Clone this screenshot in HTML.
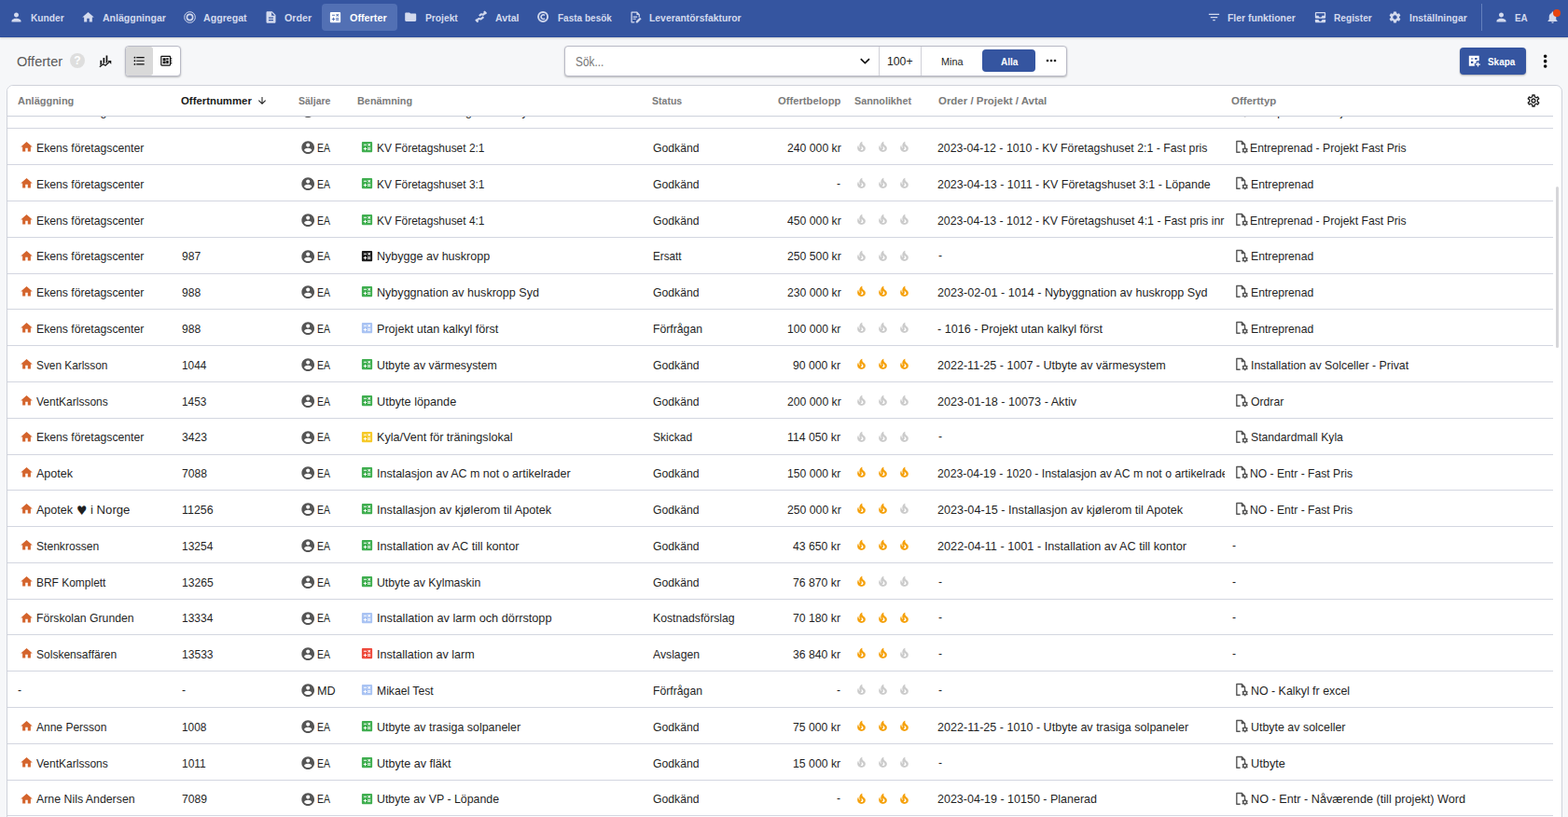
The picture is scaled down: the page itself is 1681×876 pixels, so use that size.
<!DOCTYPE html>
<html lang="sv"><head><meta charset="utf-8"><title>Offerter</title>
<style>
*{box-sizing:border-box;margin:0;padding:0}
html,body{width:1681px;height:876px;overflow:hidden;background:#f6f7f9;font-family:"Liberation Sans","DejaVu Sans",sans-serif;}
body{position:relative}
.i{position:absolute;display:block;overflow:visible}
.t{position:absolute;white-space:nowrap;line-height:16px;height:16px;transform-origin:0 0}
#nav{position:absolute;left:0;top:0;width:1681px;height:40px;background:#3555a0;border-bottom:1px solid #2d4e9d;box-shadow:0 1px 2px rgba(0,0,0,.18)}
.n{font-size:11px;font-weight:700;color:#d3daee}
.na{color:#fff}
#act{position:absolute;left:345px;top:4px;width:81px;height:29px;border-radius:4px;background:#5270b4}
#div{position:absolute;left:1588px;top:4px;width:1px;height:29px;background:#6480bd}
#dot{position:absolute;left:1665px;top:10px;width:8px;height:8px;border-radius:50%;background:#e8440f}
.box{position:absolute;background:#fff;border:1px solid #b9bac6;border-radius:4px;box-shadow:0 1px 2px rgba(0,0,0,.25)}
#card{position:absolute;left:7px;top:91px;width:1668px;height:800px;background:#fff;border:1px solid #cfd2da;border-radius:7px;overflow:hidden}
#rows{position:absolute;left:0;top:0;width:1657px;height:800px}
.r{position:absolute;left:0;width:1657px;border-bottom:1px solid #d3d6e0;font-size:13px;color:#1f1f1f}
#thead{position:absolute;left:0;top:0;width:1657px;height:33px;background:#fff;border-bottom:1px solid #cdd1dc}
.h{font-size:11px;font-weight:700;color:#7b7b7b}
.hd{color:#1a1a1a}
.clip{position:absolute;overflow:hidden;top:0}
#sb{position:absolute;left:1660px;top:108px;width:3px;height:173px;background:#d6d6d9;border-radius:2px}
</style></head>
<body>
<div id="nav">
<div id="act"></div>
<svg class="i" style="left:10.0px;top:10.5px" width="15" height="15" viewBox="0 0 24 24" fill="#d3daee"><path d="M12 12c2.21 0 4-1.79 4-4s-1.79-4-4-4-4 1.79-4 4 1.79 4 4 4zm0 2c-2.67 0-8 1.34-8 4v2h16v-2c0-2.66-5.33-4-8-4z"/></svg><span class="t n" style="left:32.76px;top:11px;transform:scaleX(0.9276);">Kunder</span>
<svg class="i" style="left:87.3px;top:10.5px" width="15" height="15" viewBox="0 0 24 24" fill="#d3daee"><path d="M10 20v-6h4v6h5v-8h3L12 3 2 12h3v8z"/></svg><span class="t n" style="left:109.6px;top:11px;transform:scaleX(0.957);">Anläggningar</span>
<svg class="i" style="left:195.5px;top:10.5px" width="15" height="15" viewBox="0 0 24 24" fill="#d3daee"><circle cx="12" cy="12" r="9.3" fill="none" stroke="#d3daee" stroke-width="1.6"/><circle cx="12" cy="12" r="5" fill="none" stroke="#d3daee" stroke-width="2.6"/></svg><span class="t n" style="left:218.4px;top:11px;transform:scaleX(0.9649);">Aggregat</span>
<svg class="i" style="left:282.5px;top:10.5px" width="15" height="15" viewBox="0 0 24 24" fill="#d3daee"><path d="M14 2H6c-1.1 0-1.99.9-1.99 2L4 20c0 1.1.89 2 1.99 2H18c1.1 0 2-.9 2-2V8l-6-6zm2 16H8v-2h8v2zm0-4H8v-2h8v2zm-3-5V3.5L18.5 9H13z"/></svg><span class="t n" style="left:305.4px;top:11px;transform:scaleX(0.9751);">Order</span>
<svg class="i" style="left:352.2px;top:10.5px" width="15" height="15" viewBox="0 0 24 24" fill="#fff"><path d="M19 3H5c-1.1 0-2 .9-2 2v14c0 1.1.9 2 2 2h14c1.1 0 2-.9 2-2V5c0-1.1-.9-2-2-2zm-5.97 4.06L14.09 6l1.41 1.41L16.91 6l1.06 1.06-1.41 1.41 1.41 1.41-1.06 1.06-1.41-1.4-1.41 1.41-1.06-1.06 1.41-1.41-1.41-1.42zm-6.78.66h5v1.5h-5v-1.5zM11.5 16h-2v2H8v-2H6v-1.5h2v-2h1.5v2h2V16zm6.5 1.25h-5v-1.5h5v1.5zm0-2.5h-5v-1.5h5v1.5z"/></svg><span class="t n na" style="left:374.64px;top:11px;transform:scaleX(0.9812);">Offerter</span>
<svg class="i" style="left:432.8px;top:10.5px" width="14.4" height="14.4" viewBox="0 0 24 24" fill="#d3daee"><path d="M10 4H4c-1.1 0-1.99.9-1.99 2L2 18c0 1.1.9 2 2 2h16c1.1 0 2-.9 2-2V8c0-1.1-.9-2-2-2h-8l-2-2z"/></svg><span class="t n" style="left:455.54px;top:11px;transform:scaleX(0.9328);">Projekt</span>
<svg class="i" style="left:509.2px;top:10.5px" width="13.6" height="13.6" viewBox="0 0 24 24" fill="#d3daee"><g fill="none" stroke="#d3daee" stroke-width="3.800" stroke-linejoin="round"><path d="M8.500 10.500l3.500-3 4 .800 5-4.500"/><path d="M2.500 20.500l5-4.500 4 .800 5-4.300"/></g><path d="M18.500 1l4.500 4.500-2.500 2.500-4.500-4.500zM5 23.500l-4.500-4.500 2.500-2.500 4.500 4.500z"/></svg><span class="t n" style="left:531.2px;top:11px;transform:scaleX(0.9638);">Avtal</span>
<svg class="i" style="left:575px;top:10.5px" width="14.2" height="14.2" viewBox="0 0 24 24" fill="#d3daee"><circle cx="12" cy="12" r="8.500" fill="none" stroke="#d3daee" stroke-width="3.200"/><path d="M15.200 9.300a3.800 3.800 0 1 0 0 5.400" fill="none" stroke="#d3daee" stroke-width="2.600"/></svg><span class="t n" style="left:597.81px;top:11px;transform:scaleX(0.9108);">Fasta besök</span>
<svg class="i" style="left:674px;top:10.5px" width="15" height="15" viewBox="0 0 24 24" fill="#d3daee"><path d="M5 2.500h9.500l4.500 4.500v5h-2V8h-3.500V4.500H6v15h4v2H5c-.6 0-1-.4-1-1v-17c0-.6.4-1 1-1z"/><path d="M7.500 10.500h7v1.700h-7zM7.500 14h5v1.700h-5z"/><path d="M12.500 21.500v-2.600l6.700-6.700 2.600 2.600-6.700 6.700z"/></svg><span class="t n" style="left:696.43px;top:11px;transform:scaleX(0.9436);">Leverantörsfakturor</span>
<svg class="i" style="left:1293.5px;top:10.5px" width="15" height="15" viewBox="0 0 24 24" fill="#d3daee"><path d="M10 18h4v-2h-4v2zM3 6v2h18V6H3zm3 7h12v-2H6v2z"/></svg><span class="t n" style="left:1316.24px;top:11px;transform:scaleX(0.9441);">Fler funktioner</span>
<svg class="i" style="left:1407.8px;top:10.5px" width="15" height="15" viewBox="0 0 24 24" fill="#d3daee"><path d="M19 3H5c-1.1 0-2 .9-2 2v7c0 1.1.9 2 2 2h14c1.1 0 2-.9 2-2V5c0-1.1-.9-2-2-2zm0 6h-4c0 1.620-1.380 3-3 3s-3-1.380-3-3H5V5h14v4zm-4 7h6v3c0 1.100-.9 2-2 2H5c-1.100 0-2-.9-2-2v-3h6c0 1.660 1.340 3 3 3s3-1.340 3-3z"/></svg><span class="t n" style="left:1430.24px;top:11px;transform:scaleX(0.9264);">Register</span>
<svg class="i" style="left:1488.3px;top:10.5px" width="15" height="15" viewBox="0 0 24 24" fill="#d3daee"><path d="M19.14 12.94c.04-.3.06-.61.06-.94 0-.32-.02-.64-.07-.94l2.03-1.58c.18-.14.23-.41.12-.61l-1.92-3.32c-.12-.22-.37-.29-.59-.22l-2.39.96c-.5-.38-1.03-.7-1.62-.94l-.36-2.54c-.04-.24-.24-.41-.48-.41h-3.84c-.24 0-.43.17-.47.41l-.36 2.54c-.59.24-1.13.57-1.62.94l-2.39-.96c-.22-.08-.47 0-.59.22L2.74 8.87c-.12.21-.08.47.12.61l2.03 1.58c-.05.3-.09.63-.09.94s.02.64.07.94l-2.03 1.58c-.18.14-.23.41-.12.61l1.92 3.32c.12.22.37.29.59.22l2.39-.96c.5.38 1.03.7 1.62.94l.36 2.54c.05.24.24.41.48.41h3.84c.24 0 .44-.17.47-.41l.36-2.54c.59-.24 1.13-.56 1.62-.94l2.39.96c.22.08.47 0 .59-.22l1.92-3.32c.12-.22.07-.47-.12-.61l-2.01-1.58zM12 15.6c-1.98 0-3.6-1.62-3.6-3.6s1.62-3.6 3.6-3.6 3.6 1.62 3.6 3.6-1.62 3.6-3.6 3.6z"/></svg><span class="t n" style="left:1511.24px;top:11px;transform:scaleX(0.9446);">Inställningar</span>
<svg class="i" style="left:1601.5px;top:10.5px" width="15" height="15" viewBox="0 0 24 24" fill="#d3daee"><path d="M12 12c2.21 0 4-1.79 4-4s-1.79-4-4-4-4 1.79-4 4 1.79 4 4 4zm0 2c-2.67 0-8 1.34-8 4v2h16v-2c0-2.66-5.33-4-8-4z"/></svg><span class="t n" style="left:1624.04px;top:11px;transform:scaleX(0.9008);">EA</span>
<div id="div"></div><svg class="i" style="left:1657.3px;top:11px" width="15" height="15" viewBox="0 0 24 24" fill="#d3daee"><path d="M12 22c1.1 0 2-.9 2-2h-4c0 1.1.89 2 2 2zm6-6v-5c0-3.07-1.64-5.64-4.5-6.32V4c0-.83-.67-1.5-1.5-1.5s-1.5.67-1.5 1.5v.68C7.63 5.36 6 7.92 6 11v5l-2 2v1h16v-1l-2-2z"/></svg><div id="dot"></div>
</div>
<span class="t" style="left:17.72px;top:58px;transform:scaleX(0.9709);font-size:15px;color:#5a5a5a;">Offerter</span><div style="position:absolute;left:75px;top:57px;width:16px;height:16px;border-radius:50%;background:#dedede;color:#fff;font-size:12px;font-weight:700;text-align:center;line-height:16px">?</div><svg class="i" style="left:106.2px;top:59.2px" width="13.5" height="13.5" viewBox="0 0 24 24" fill="#111"><path d="M2.500 10h3v7.500l-3 2.500zM8 5.500h3v10h-3zM13.500 1h3v12.500l-3 2.800z"/><path d="M1.500 22.500l6.500-5.200 4.500 2.800 7.500-7" fill="none" stroke="#111" stroke-width="2.300"/><path d="M16.500 10.500h7v7z"/></svg><div class="box" style="left:134px;top:49px;width:60px;height:33px;overflow:hidden"><div style="position:absolute;left:0;top:0;width:29px;height:31px;background:#d9d9d9;border-radius:3px"></div></div><svg class="i" style="left:142px;top:58.2px" width="14.5" height="14.5" viewBox="0 0 24 24" fill="#111"><path d="M4 10.5c-.83 0-1.5.67-1.5 1.5s.67 1.5 1.5 1.5 1.5-.67 1.5-1.5-.67-1.5-1.5-1.5zm0-6c-.83 0-1.5.67-1.5 1.5S3.17 7.5 4 7.5 5.5 6.83 5.5 6 4.83 4.5 4 4.5zm0 12c-.83 0-1.5.68-1.5 1.5s.68 1.5 1.5 1.5 1.5-.68 1.5-1.5-.67-1.5-1.5-1.5zM7 19h14v-2H7v2zm0-6h14v-2H7v2zm0-8v2h14V5H7z"/></svg><svg class="i" style="left:171px;top:58.2px" width="14.5" height="14.5" viewBox="0 0 24 24" fill="#111"><path d="M22 9V7h-2V5c0-1.1-.9-2-2-2H4c-1.1 0-2 .9-2 2v14c0 1.1.9 2 2 2h14c1.1 0 2-.9 2-2v-2h2v-2h-2v-2h2v-2h-2V9h2zm-4 10H4V5h14v14zM6 13h5v4H6zm6-6h4v3h-4zM6 7h5v5H6zm6 4h4v6h-4z"/></svg>
<div class="box" style="left:605px;top:49px;width:539px;height:33px"><div style="position:absolute;left:336px;top:0;width:1px;height:31px;background:#d0d0d8"></div><div style="position:absolute;left:381px;top:0;width:1px;height:31px;background:#d0d0d8"></div><div style="position:absolute;left:447px;top:3px;width:57px;height:24px;border-radius:4px;background:#3555a0"></div></div><span class="t" style="left:616.64px;top:58px;transform:scaleX(0.8455);font-size:14px;color:#777;">Sök...</span><svg class="i" style="left:917.2px;top:55.3px" width="20.8" height="20.8" viewBox="0 0 24 24" fill="#111"><path d="M16.59 8.59L12 13.17 7.41 8.59 6 10l6 6 6-6z"/></svg><span class="t" style="left:951.38px;top:57.5px;transform:scaleX(0.94);font-size:13px;color:#222;">100+</span><span class="t" style="left:1008.7px;top:57.5px;transform:scaleX(0.94);font-size:11.5px;color:#222;">Mina</span><span class="t" style="left:1072.56px;top:57.5px;transform:scaleX(0.9138);font-size:11px;font-weight:700;color:#fff;">Alla</span><svg class="i" style="left:1119.2px;top:57px" width="16" height="16" viewBox="0 0 24 24" fill="#222"><path d="M6 10c-1.1 0-2 .9-2 2s.9 2 2 2 2-.9 2-2-.9-2-2-2zm12 0c-1.1 0-2 .9-2 2s.9 2 2 2 2-.9 2-2-.9-2-2-2zm-6 0c-1.1 0-2 .9-2 2s.9 2 2 2 2-.9 2-2-.9-2-2-2z"/></svg>
<div style="position:absolute;left:1565px;top:51px;width:71px;height:29px;border-radius:4px;background:#3555a0;box-shadow:0 1px 2px rgba(0,0,0,.3)"></div><svg class="i" style="left:1573px;top:58px" width="14.5" height="14.5" viewBox="0 0 24 24" fill="#fff"><path d="M3 3h18v9h-5v4h-3v5H3z"/><path d="M6.500 7.500h4v1.500h-4zM13.500 6.500h4v3.500h-4zM6.500 13h4v3.500h-4z" fill="#3555a0"/><path d="M18 14.500h2v3h3v2h-3v3h-2v-3h-3v-2h3z"/></svg><span class="t" style="left:1594.64px;top:58px;transform:scaleX(0.9016);font-size:11px;font-weight:700;color:#fff;">Skapa</span><svg class="i" style="left:1645.75px;top:54.75px" width="21.3" height="21.3" viewBox="0 0 24 24" fill="#111"><path d="M12 8c1.1 0 2-.9 2-2s-.9-2-2-2-2 .9-2 2 .9 2 2 2zm0 2c-1.1 0-2 .9-2 2s.9 2 2 2 2-.9 2-2-.9-2-2-2zm0 6c-1.1 0-2 .9-2 2s.9 2 2 2 2-.9 2-2-.9-2-2-2z"/></svg>
<div id="card">
<div id="rows">
<div class="r" style="top:7px;height:39px"><svg class="i" style="left:13px;top:12px" width="15" height="15" viewBox="0 0 24 24" fill="#d4642c"><path d="M10 20v-6h4v6h5v-8h3L12 3 2 12h3v8z"/></svg><span class="t" style="left:30.6px;top:13px;transform:scaleX(0.939);">Ekens företagscenter</span><svg class="i" style="left:313.8px;top:11.6px" width="16.4" height="16.4" viewBox="0 0 24 24" fill="#555"><path d="M12 2C6.48 2 2 6.48 2 12s4.48 10 10 10 10-4.48 10-10S17.52 2 12 2zm0 3c1.66 0 3 1.34 3 3s-1.34 3-3 3-3-1.34-3-3 1.34-3 3-3zm0 14.2c-2.5 0-4.71-1.28-6-3.22.03-1.99 4-3.08 6-3.08 1.99 0 5.97 1.09 6 3.08-1.29 1.94-3.5 3.22-6 3.22z"/></svg><span class="t" style="left:332.4px;top:13px;transform:scaleX(0.8034);">EA</span><svg class="i" style="left:378px;top:12px" width="15" height="15" viewBox="0 0 24 24" fill="#3fae4f"><path d="M19 3H5c-1.1 0-2 .9-2 2v14c0 1.1.9 2 2 2h14c1.1 0 2-.9 2-2V5c0-1.1-.9-2-2-2zm-5.97 4.06L14.09 6l1.41 1.41L16.91 6l1.06 1.06-1.41 1.41 1.41 1.41-1.06 1.06-1.41-1.4-1.41 1.41-1.06-1.06 1.41-1.41-1.41-1.42zm-6.78.66h5v1.5h-5v-1.5zM11.5 16h-2v2H8v-2H6v-1.5h2v-2h1.5v2h2V16zm6.5 1.25h-5v-1.5h5v1.5zm0-2.5h-5v-1.5h5v1.5z"/></svg><span class="t" style="left:396.1px;top:13px;transform:scaleX(0.94);">Ventilation Företagshuset - ny</span><span class="t" style="left:692.0px;top:13px;transform:scaleX(0.94);">Godkänd</span><span class="t" style="left:836.3px;top:13px;transform:scaleX(0.94);">120 000 kr</span><svg class="i" style="left:908.7px;top:13px" width="13" height="13" viewBox="0 0 24 24" fill="#cbcbcb"><path d="M19.48 12.35c-1.57-4.08-7.16-4.3-5.81-10.23.1-.44-.37-.78-.75-.55C9.29 3.71 6.68 8 8.87 13.62c.18.46-.36.89-.75.59-1.81-1.37-2-3.34-1.840-4.750.06-.52-.62-.77-.91-.34C4.69 10.160 4 11.840 4 14.370c.38 5.600 5.110 7.320 6.810 7.540 2.430.310 5.060-.140 6.950-1.870 2.080-1.930 2.840-5.010 1.720-7.690zm-9.280 5.030c1.440-.350 2.180-1.390 2.380-2.310.33-1.430-.96-2.830-.09-5.090.33 1.870 3.270 3.040 3.270 5.080.08 2.530-2.660 4.700-5.560 2.320z"/></svg><svg class="i" style="left:931.7px;top:13px" width="13" height="13" viewBox="0 0 24 24" fill="#cbcbcb"><path d="M19.48 12.35c-1.57-4.08-7.16-4.3-5.81-10.23.1-.44-.37-.78-.75-.55C9.29 3.71 6.68 8 8.87 13.62c.18.46-.36.89-.75.59-1.81-1.37-2-3.34-1.840-4.750.06-.52-.62-.77-.91-.34C4.69 10.160 4 11.840 4 14.370c.38 5.600 5.110 7.320 6.810 7.540 2.430.310 5.060-.140 6.950-1.870 2.080-1.930 2.840-5.010 1.720-7.690zm-9.280 5.030c1.440-.350 2.180-1.390 2.380-2.310.33-1.430-.96-2.830-.09-5.090.33 1.870 3.270 3.040 3.270 5.080.08 2.530-2.660 4.700-5.560 2.320z"/></svg><svg class="i" style="left:954.7px;top:13px" width="13" height="13" viewBox="0 0 24 24" fill="#cbcbcb"><path d="M19.48 12.35c-1.57-4.08-7.16-4.3-5.81-10.23.1-.44-.37-.78-.75-.55C9.29 3.71 6.68 8 8.87 13.62c.18.46-.36.89-.75.59-1.81-1.37-2-3.34-1.840-4.750.06-.52-.62-.77-.91-.34C4.69 10.160 4 11.840 4 14.370c.38 5.600 5.110 7.320 6.810 7.540 2.430.310 5.060-.140 6.950-1.870 2.080-1.930 2.840-5.010 1.720-7.690zm-9.280 5.030c1.440-.350 2.180-1.390 2.380-2.310.33-1.430-.96-2.830-.09-5.090.33 1.870 3.270 3.040 3.270 5.080.08 2.530-2.660 4.700-5.560 2.320z"/></svg><div class="clip" style="left:992px;width:313.4px;height:38px"><span class="t" style="left:5.5px;top:12px;transform:scaleX(0.94);">-</span></div><svg class="i" style="left:1314.1px;top:11.3px" width="16.7" height="16.7" viewBox="0 0 24 24" fill="#555"><path d="M5.500 2.500h8.200L19 7.800v5.400h-2V9h-4.500V4.500H6.500v15H11v2H5.500c-.600 0-1-.400-1-1v-17c0-.600.400-1 1-1z"/><path d="M22.900 18.700l-1.200-.900c0-.300 0-.500 0-.800l1.200-.900-1.200-2.100-1.400.600c-.200-.200-.500-.300-.700-.400l-.200-1.500h-2.400l-.200 1.500c-.300.100-.500.200-.700.400l-1.400-.600-1.200 2.100 1.200.900c0 .300 0 .500 0 .800l-1.200.900 1.200 2.100 1.400-.600c.200.200.500.300.700.400l.200 1.500h2.400l.200-1.500c.300-.100.500-.200.700-.400l1.400.600zM18.200 19c-.900 0-1.600-.700-1.600-1.600s.700-1.600 1.600-1.600 1.600.700 1.600 1.600-.700 1.600-1.600 1.600z"/></svg><span class="t" style="left:1332.48px;top:13px;transform:scaleX(0.9395);">Entreprenad - Projekt Fast Pris</span></div>
<div class="r" style="top:46px;height:39px"><svg class="i" style="left:13px;top:12px" width="15" height="15" viewBox="0 0 24 24" fill="#d4642c"><path d="M10 20v-6h4v6h5v-8h3L12 3 2 12h3v8z"/></svg><span class="t" style="left:30.6px;top:13px;transform:scaleX(0.939);">Ekens företagscenter</span><svg class="i" style="left:313.8px;top:11.6px" width="16.4" height="16.4" viewBox="0 0 24 24" fill="#555"><path d="M12 2C6.48 2 2 6.48 2 12s4.48 10 10 10 10-4.48 10-10S17.52 2 12 2zm0 3c1.66 0 3 1.34 3 3s-1.34 3-3 3-3-1.34-3-3 1.34-3 3-3zm0 14.2c-2.5 0-4.71-1.28-6-3.22.03-1.99 4-3.08 6-3.08 1.99 0 5.97 1.09 6 3.08-1.29 1.94-3.5 3.22-6 3.22z"/></svg><span class="t" style="left:332.4px;top:13px;transform:scaleX(0.8034);">EA</span><svg class="i" style="left:378px;top:12px" width="15" height="15" viewBox="0 0 24 24" fill="#3fae4f"><path d="M19 3H5c-1.1 0-2 .9-2 2v14c0 1.1.9 2 2 2h14c1.1 0 2-.9 2-2V5c0-1.1-.9-2-2-2zm-5.97 4.06L14.09 6l1.41 1.41L16.91 6l1.06 1.06-1.41 1.41 1.41 1.41-1.06 1.06-1.41-1.4-1.41 1.41-1.06-1.06 1.41-1.41-1.41-1.42zm-6.78.66h5v1.5h-5v-1.5zM11.5 16h-2v2H8v-2H6v-1.5h2v-2h1.5v2h2V16zm6.5 1.25h-5v-1.5h5v1.5zm0-2.5h-5v-1.5h5v1.5z"/></svg><span class="t" style="left:395.74px;top:13px;transform:scaleX(0.9185);">KV Företagshuset 2:1</span><span class="t" style="left:692.0px;top:13px;transform:scaleX(0.94);">Godkänd</span><span class="t" style="left:835.9px;top:13px;transform:scaleX(0.94);">240 000 kr</span><svg class="i" style="left:908.7px;top:13px" width="13" height="13" viewBox="0 0 24 24" fill="#cbcbcb"><path d="M19.48 12.35c-1.57-4.08-7.16-4.3-5.81-10.23.1-.44-.37-.78-.75-.55C9.29 3.71 6.68 8 8.87 13.62c.18.46-.36.89-.75.59-1.81-1.37-2-3.34-1.840-4.750.06-.52-.62-.77-.91-.34C4.69 10.160 4 11.840 4 14.370c.38 5.600 5.110 7.320 6.810 7.540 2.430.310 5.060-.140 6.950-1.870 2.080-1.930 2.840-5.010 1.720-7.690zm-9.280 5.030c1.440-.350 2.180-1.390 2.380-2.310.33-1.430-.96-2.830-.09-5.090.33 1.870 3.270 3.040 3.270 5.080.08 2.530-2.660 4.700-5.560 2.320z"/></svg><svg class="i" style="left:931.7px;top:13px" width="13" height="13" viewBox="0 0 24 24" fill="#cbcbcb"><path d="M19.48 12.35c-1.57-4.08-7.16-4.3-5.81-10.23.1-.44-.37-.78-.75-.55C9.29 3.71 6.68 8 8.87 13.62c.18.46-.36.89-.75.59-1.81-1.37-2-3.34-1.840-4.750.06-.52-.62-.77-.91-.34C4.69 10.160 4 11.840 4 14.370c.38 5.600 5.110 7.320 6.810 7.540 2.430.310 5.060-.140 6.950-1.870 2.080-1.930 2.840-5.010 1.720-7.690zm-9.280 5.030c1.440-.350 2.180-1.390 2.380-2.310.33-1.430-.96-2.830-.09-5.090.33 1.870 3.270 3.040 3.270 5.080.08 2.530-2.660 4.700-5.560 2.320z"/></svg><svg class="i" style="left:954.7px;top:13px" width="13" height="13" viewBox="0 0 24 24" fill="#cbcbcb"><path d="M19.48 12.35c-1.57-4.08-7.16-4.3-5.81-10.23.1-.44-.37-.78-.75-.55C9.29 3.71 6.68 8 8.87 13.62c.18.46-.36.89-.75.59-1.81-1.37-2-3.34-1.840-4.750.06-.52-.62-.77-.91-.34C4.69 10.160 4 11.840 4 14.370c.38 5.600 5.110 7.320 6.810 7.540 2.430.310 5.060-.140 6.950-1.870 2.080-1.930 2.840-5.010 1.720-7.690zm-9.280 5.030c1.440-.350 2.180-1.390 2.380-2.310.33-1.430-.96-2.830-.09-5.090.33 1.870 3.270 3.040 3.270 5.080.08 2.530-2.660 4.700-5.560 2.320z"/></svg><div class="clip" style="left:992px;width:313.4px;height:38px"><span class="t" style="left:5.2px;top:13px;transform:scaleX(0.9467);">2023-04-12 - 1010 - KV Företagshuset 2:1 - Fast pris</span></div><svg class="i" style="left:1314.1px;top:11.3px" width="16.7" height="16.7" viewBox="0 0 24 24" fill="#555"><path d="M5.500 2.500h8.200L19 7.800v5.400h-2V9h-4.500V4.500H6.500v15H11v2H5.500c-.600 0-1-.400-1-1v-17c0-.600.400-1 1-1z"/><path d="M22.900 18.700l-1.200-.900c0-.300 0-.500 0-.800l1.200-.900-1.200-2.100-1.400.600c-.200-.200-.500-.300-.700-.400l-.200-1.500h-2.400l-.200 1.500c-.300.100-.500.200-.700.400l-1.400-.600-1.200 2.100 1.200.900c0 .300 0 .500 0 .800l-1.200.900 1.200 2.100 1.400-.600c.200.200.500.300.700.400l.200 1.500h2.400l.200-1.500c.300-.100.500-.200.700-.400l1.400.600zM18.200 19c-.900 0-1.600-.700-1.600-1.600s.700-1.600 1.600-1.600 1.600.700 1.600 1.600-.700 1.600-1.600 1.600z"/></svg><span class="t" style="left:1332.48px;top:13px;transform:scaleX(0.9395);">Entreprenad - Projekt Fast Pris</span></div>
<div class="r" style="top:85px;height:39px"><svg class="i" style="left:13px;top:12px" width="15" height="15" viewBox="0 0 24 24" fill="#d4642c"><path d="M10 20v-6h4v6h5v-8h3L12 3 2 12h3v8z"/></svg><span class="t" style="left:30.6px;top:13px;transform:scaleX(0.939);">Ekens företagscenter</span><svg class="i" style="left:313.8px;top:11.6px" width="16.4" height="16.4" viewBox="0 0 24 24" fill="#555"><path d="M12 2C6.48 2 2 6.48 2 12s4.48 10 10 10 10-4.48 10-10S17.52 2 12 2zm0 3c1.66 0 3 1.34 3 3s-1.34 3-3 3-3-1.34-3-3 1.34-3 3-3zm0 14.2c-2.5 0-4.71-1.28-6-3.22.03-1.99 4-3.08 6-3.08 1.99 0 5.97 1.09 6 3.08-1.29 1.94-3.5 3.22-6 3.22z"/></svg><span class="t" style="left:332.4px;top:13px;transform:scaleX(0.8034);">EA</span><svg class="i" style="left:378px;top:12px" width="15" height="15" viewBox="0 0 24 24" fill="#3fae4f"><path d="M19 3H5c-1.1 0-2 .9-2 2v14c0 1.1.9 2 2 2h14c1.1 0 2-.9 2-2V5c0-1.1-.9-2-2-2zm-5.97 4.06L14.09 6l1.41 1.41L16.91 6l1.06 1.06-1.41 1.41 1.41 1.41-1.06 1.06-1.41-1.4-1.41 1.41-1.06-1.06 1.41-1.41-1.41-1.42zm-6.78.66h5v1.5h-5v-1.5zM11.5 16h-2v2H8v-2H6v-1.5h2v-2h1.5v2h2V16zm6.5 1.25h-5v-1.5h5v1.5zm0-2.5h-5v-1.5h5v1.5z"/></svg><span class="t" style="left:395.74px;top:13px;transform:scaleX(0.9185);">KV Företagshuset 3:1</span><span class="t" style="left:692.0px;top:13px;transform:scaleX(0.94);">Godkänd</span><span class="t" style="left:889.06px;top:12px;transform:scaleX(0.94);">-</span><svg class="i" style="left:908.7px;top:13px" width="13" height="13" viewBox="0 0 24 24" fill="#cbcbcb"><path d="M19.48 12.35c-1.57-4.08-7.16-4.3-5.81-10.23.1-.44-.37-.78-.75-.55C9.29 3.71 6.68 8 8.87 13.62c.18.46-.36.89-.75.59-1.81-1.37-2-3.34-1.840-4.750.06-.52-.62-.77-.91-.34C4.69 10.160 4 11.840 4 14.370c.38 5.600 5.110 7.320 6.810 7.540 2.430.310 5.060-.140 6.950-1.870 2.080-1.930 2.840-5.010 1.720-7.690zm-9.280 5.030c1.440-.350 2.180-1.390 2.380-2.310.33-1.430-.96-2.830-.09-5.090.33 1.870 3.270 3.040 3.270 5.080.08 2.530-2.660 4.700-5.560 2.320z"/></svg><svg class="i" style="left:931.7px;top:13px" width="13" height="13" viewBox="0 0 24 24" fill="#cbcbcb"><path d="M19.48 12.35c-1.57-4.08-7.16-4.3-5.81-10.23.1-.44-.37-.78-.75-.55C9.29 3.71 6.68 8 8.87 13.62c.18.46-.36.89-.75.59-1.81-1.37-2-3.34-1.840-4.750.06-.52-.62-.77-.91-.34C4.69 10.160 4 11.840 4 14.370c.38 5.600 5.110 7.320 6.810 7.540 2.430.310 5.060-.140 6.950-1.870 2.080-1.930 2.840-5.010 1.720-7.690zm-9.280 5.030c1.440-.350 2.180-1.390 2.380-2.310.33-1.430-.96-2.830-.09-5.090.33 1.870 3.270 3.040 3.270 5.080.08 2.530-2.660 4.700-5.560 2.320z"/></svg><svg class="i" style="left:954.7px;top:13px" width="13" height="13" viewBox="0 0 24 24" fill="#cbcbcb"><path d="M19.48 12.35c-1.57-4.08-7.16-4.3-5.81-10.23.1-.44-.37-.78-.75-.55C9.29 3.71 6.68 8 8.87 13.62c.18.46-.36.89-.75.59-1.81-1.37-2-3.34-1.840-4.750.06-.52-.62-.77-.91-.34C4.69 10.160 4 11.840 4 14.370c.38 5.600 5.110 7.320 6.810 7.540 2.430.310 5.060-.140 6.950-1.870 2.080-1.930 2.840-5.010 1.720-7.690zm-9.280 5.030c1.440-.350 2.180-1.390 2.380-2.310.33-1.430-.96-2.830-.09-5.090.33 1.870 3.270 3.040 3.270 5.080.08 2.530-2.660 4.700-5.560 2.320z"/></svg><div class="clip" style="left:992px;width:313.4px;height:38px"><span class="t" style="left:5.2px;top:13px;transform:scaleX(0.9585);">2023-04-13 - 1011 - KV Företagshuset 3:1 - Löpande</span></div><svg class="i" style="left:1314.1px;top:11.3px" width="16.7" height="16.7" viewBox="0 0 24 24" fill="#555"><path d="M5.500 2.500h8.200L19 7.800v5.400h-2V9h-4.500V4.500H6.500v15H11v2H5.500c-.600 0-1-.400-1-1v-17c0-.600.400-1 1-1z"/><path d="M22.900 18.700l-1.200-.900c0-.300 0-.500 0-.800l1.200-.900-1.200-2.100-1.400.600c-.200-.200-.500-.300-.700-.400l-.200-1.500h-2.400l-.200 1.500c-.300.100-.500.200-.700.400l-1.400-.600-1.200 2.100 1.200.900c0 .300 0 .500 0 .800l-1.200.900 1.200 2.100 1.400-.600c.200.200.500.300.700.400l.200 1.500h2.400l.200-1.500c.300-.100.500-.200.700-.400l1.400.600zM18.200 19c-.900 0-1.600-.700-1.600-1.600s.700-1.600 1.600-1.600 1.600.700 1.600 1.600-.700 1.600-1.600 1.600z"/></svg><span class="t" style="left:1332.75px;top:13px;transform:scaleX(0.94);">Entreprenad</span></div>
<div class="r" style="top:124px;height:39px"><svg class="i" style="left:13px;top:12px" width="15" height="15" viewBox="0 0 24 24" fill="#d4642c"><path d="M10 20v-6h4v6h5v-8h3L12 3 2 12h3v8z"/></svg><span class="t" style="left:30.6px;top:13px;transform:scaleX(0.939);">Ekens företagscenter</span><svg class="i" style="left:313.8px;top:11.6px" width="16.4" height="16.4" viewBox="0 0 24 24" fill="#555"><path d="M12 2C6.48 2 2 6.48 2 12s4.48 10 10 10 10-4.48 10-10S17.52 2 12 2zm0 3c1.66 0 3 1.34 3 3s-1.34 3-3 3-3-1.34-3-3 1.34-3 3-3zm0 14.2c-2.5 0-4.71-1.28-6-3.22.03-1.99 4-3.08 6-3.08 1.99 0 5.97 1.09 6 3.08-1.29 1.94-3.5 3.22-6 3.22z"/></svg><span class="t" style="left:332.4px;top:13px;transform:scaleX(0.8034);">EA</span><svg class="i" style="left:378px;top:12px" width="15" height="15" viewBox="0 0 24 24" fill="#3fae4f"><path d="M19 3H5c-1.1 0-2 .9-2 2v14c0 1.1.9 2 2 2h14c1.1 0 2-.9 2-2V5c0-1.1-.9-2-2-2zm-5.97 4.06L14.09 6l1.41 1.41L16.91 6l1.06 1.06-1.41 1.41 1.41 1.41-1.06 1.06-1.41-1.4-1.41 1.41-1.06-1.06 1.41-1.41-1.41-1.42zm-6.78.66h5v1.5h-5v-1.5zM11.5 16h-2v2H8v-2H6v-1.5h2v-2h1.5v2h2V16zm6.5 1.25h-5v-1.5h5v1.5zm0-2.5h-5v-1.5h5v1.5z"/></svg><span class="t" style="left:395.74px;top:13px;transform:scaleX(0.9185);">KV Företagshuset 4:1</span><span class="t" style="left:692.0px;top:13px;transform:scaleX(0.94);">Godkänd</span><span class="t" style="left:835.9px;top:13px;transform:scaleX(0.94);">450 000 kr</span><svg class="i" style="left:908.7px;top:13px" width="13" height="13" viewBox="0 0 24 24" fill="#cbcbcb"><path d="M19.48 12.35c-1.57-4.08-7.16-4.3-5.81-10.23.1-.44-.37-.78-.75-.55C9.29 3.71 6.68 8 8.87 13.62c.18.46-.36.89-.75.59-1.81-1.37-2-3.34-1.840-4.750.06-.52-.62-.77-.91-.34C4.69 10.160 4 11.840 4 14.370c.38 5.600 5.110 7.320 6.810 7.540 2.430.310 5.060-.140 6.950-1.870 2.080-1.930 2.840-5.010 1.720-7.690zm-9.280 5.030c1.440-.350 2.180-1.390 2.380-2.310.33-1.430-.96-2.830-.09-5.090.33 1.870 3.270 3.040 3.270 5.080.08 2.530-2.660 4.700-5.560 2.320z"/></svg><svg class="i" style="left:931.7px;top:13px" width="13" height="13" viewBox="0 0 24 24" fill="#cbcbcb"><path d="M19.48 12.35c-1.57-4.08-7.16-4.3-5.81-10.23.1-.44-.37-.78-.75-.55C9.29 3.71 6.68 8 8.87 13.62c.18.46-.36.89-.75.59-1.81-1.37-2-3.34-1.840-4.750.06-.52-.62-.77-.91-.34C4.69 10.160 4 11.840 4 14.370c.38 5.600 5.110 7.320 6.810 7.540 2.430.310 5.060-.140 6.950-1.870 2.080-1.930 2.840-5.010 1.720-7.690zm-9.280 5.030c1.440-.350 2.180-1.390 2.380-2.310.33-1.430-.96-2.830-.09-5.090.33 1.870 3.270 3.040 3.270 5.080.08 2.530-2.660 4.700-5.560 2.320z"/></svg><svg class="i" style="left:954.7px;top:13px" width="13" height="13" viewBox="0 0 24 24" fill="#cbcbcb"><path d="M19.48 12.35c-1.57-4.08-7.16-4.3-5.81-10.23.1-.44-.37-.78-.75-.55C9.29 3.71 6.68 8 8.87 13.62c.18.46-.36.89-.75.59-1.81-1.37-2-3.34-1.840-4.750.06-.52-.62-.77-.91-.34C4.69 10.160 4 11.840 4 14.370c.38 5.600 5.110 7.320 6.810 7.540 2.430.310 5.060-.140 6.950-1.870 2.080-1.930 2.840-5.010 1.720-7.690zm-9.280 5.030c1.440-.350 2.180-1.390 2.380-2.310.33-1.430-.96-2.830-.09-5.090.33 1.870 3.270 3.040 3.270 5.080.08 2.530-2.660 4.700-5.560 2.320z"/></svg><div class="clip" style="left:992px;width:313.4px;height:38px"><span class="t" style="left:5.2px;top:13px;transform:scaleX(0.9497);">2023-04-13 - 1012 - KV Företagshuset 4:1 - Fast pris inr</span></div><svg class="i" style="left:1314.1px;top:11.3px" width="16.7" height="16.7" viewBox="0 0 24 24" fill="#555"><path d="M5.500 2.500h8.200L19 7.800v5.400h-2V9h-4.500V4.500H6.500v15H11v2H5.500c-.600 0-1-.400-1-1v-17c0-.600.400-1 1-1z"/><path d="M22.900 18.700l-1.200-.900c0-.300 0-.500 0-.800l1.200-.900-1.200-2.100-1.400.600c-.200-.200-.500-.300-.700-.400l-.200-1.500h-2.400l-.200 1.500c-.300.100-.500.200-.700.400l-1.400-.600-1.200 2.100 1.200.900c0 .300 0 .500 0 .800l-1.200.900 1.200 2.100 1.400-.600c.200.200.500.300.700.400l.200 1.500h2.400l.200-1.500c.300-.100.500-.200.700-.400l1.400.600zM18.200 19c-.900 0-1.600-.700-1.600-1.600s.700-1.600 1.600-1.600 1.600.700 1.600 1.600-.700 1.600-1.600 1.600z"/></svg><span class="t" style="left:1332.48px;top:13px;transform:scaleX(0.9395);">Entreprenad - Projekt Fast Pris</span></div>
<div class="r" style="top:163px;height:39px"><svg class="i" style="left:13px;top:12px" width="15" height="15" viewBox="0 0 24 24" fill="#d4642c"><path d="M10 20v-6h4v6h5v-8h3L12 3 2 12h3v8z"/></svg><span class="t" style="left:30.6px;top:12px;transform:scaleX(0.939);">Ekens företagscenter</span><span class="t" style="left:186.88px;top:12px;transform:scaleX(0.9293);">987</span><svg class="i" style="left:313.8px;top:11.6px" width="16.4" height="16.4" viewBox="0 0 24 24" fill="#555"><path d="M12 2C6.48 2 2 6.48 2 12s4.48 10 10 10 10-4.48 10-10S17.52 2 12 2zm0 3c1.66 0 3 1.34 3 3s-1.34 3-3 3-3-1.34-3-3 1.34-3 3-3zm0 14.2c-2.5 0-4.71-1.28-6-3.22.03-1.99 4-3.08 6-3.08 1.99 0 5.97 1.09 6 3.08-1.29 1.94-3.5 3.22-6 3.22z"/></svg><span class="t" style="left:332.4px;top:12px;transform:scaleX(0.8034);">EA</span><svg class="i" style="left:378px;top:12px" width="15" height="15" viewBox="0 0 24 24" fill="#1c1c1c"><path d="M19 3H5c-1.1 0-2 .9-2 2v14c0 1.1.9 2 2 2h14c1.1 0 2-.9 2-2V5c0-1.1-.9-2-2-2zm-5.97 4.06L14.09 6l1.41 1.41L16.91 6l1.06 1.06-1.41 1.41 1.41 1.41-1.06 1.06-1.41-1.4-1.41 1.41-1.06-1.06 1.41-1.41-1.41-1.42zm-6.78.66h5v1.5h-5v-1.5zM11.5 16h-2v2H8v-2H6v-1.5h2v-2h1.5v2h2V16zm6.5 1.25h-5v-1.5h5v1.5zm0-2.5h-5v-1.5h5v1.5z"/></svg><span class="t" style="left:395.74px;top:12px;transform:scaleX(0.9639);">Nybygge av huskropp</span><span class="t" style="left:691.76px;top:12px;transform:scaleX(0.9);">Ersatt</span><span class="t" style="left:835.9px;top:12px;transform:scaleX(0.94);">250 500 kr</span><svg class="i" style="left:908.7px;top:13px" width="13" height="13" viewBox="0 0 24 24" fill="#cbcbcb"><path d="M19.48 12.35c-1.57-4.08-7.16-4.3-5.81-10.23.1-.44-.37-.78-.75-.55C9.29 3.71 6.68 8 8.87 13.62c.18.46-.36.89-.75.59-1.81-1.37-2-3.34-1.840-4.750.06-.52-.62-.77-.91-.34C4.69 10.160 4 11.840 4 14.370c.38 5.600 5.110 7.320 6.810 7.540 2.430.310 5.060-.140 6.950-1.870 2.080-1.930 2.840-5.010 1.720-7.690zm-9.280 5.030c1.440-.350 2.180-1.390 2.380-2.310.33-1.430-.96-2.830-.09-5.090.33 1.870 3.270 3.040 3.270 5.080.08 2.530-2.660 4.700-5.560 2.320z"/></svg><svg class="i" style="left:931.7px;top:13px" width="13" height="13" viewBox="0 0 24 24" fill="#cbcbcb"><path d="M19.48 12.35c-1.57-4.08-7.16-4.3-5.81-10.23.1-.44-.37-.78-.75-.55C9.29 3.71 6.68 8 8.87 13.62c.18.46-.36.89-.75.59-1.81-1.37-2-3.34-1.840-4.750.06-.52-.62-.77-.91-.34C4.69 10.160 4 11.840 4 14.370c.38 5.600 5.110 7.320 6.810 7.540 2.430.310 5.060-.140 6.950-1.870 2.080-1.930 2.840-5.010 1.720-7.690zm-9.280 5.030c1.440-.350 2.180-1.390 2.380-2.310.33-1.430-.96-2.830-.09-5.090.33 1.870 3.270 3.040 3.270 5.080.08 2.530-2.660 4.700-5.560 2.320z"/></svg><svg class="i" style="left:954.7px;top:13px" width="13" height="13" viewBox="0 0 24 24" fill="#cbcbcb"><path d="M19.48 12.35c-1.57-4.08-7.16-4.3-5.81-10.23.1-.44-.37-.78-.75-.55C9.29 3.71 6.68 8 8.87 13.62c.18.46-.36.89-.75.59-1.81-1.37-2-3.34-1.840-4.750.06-.52-.62-.77-.91-.34C4.69 10.160 4 11.840 4 14.370c.38 5.600 5.110 7.320 6.810 7.540 2.430.310 5.060-.140 6.950-1.870 2.080-1.930 2.840-5.010 1.720-7.690zm-9.280 5.030c1.440-.350 2.180-1.390 2.380-2.310.33-1.430-.96-2.830-.09-5.090.33 1.870 3.270 3.040 3.270 5.080.08 2.530-2.660 4.700-5.560 2.320z"/></svg><div class="clip" style="left:992px;width:313.4px;height:38px"><span class="t" style="left:5.5px;top:11px;transform:scaleX(0.94);">-</span></div><svg class="i" style="left:1314.1px;top:11.3px" width="16.7" height="16.7" viewBox="0 0 24 24" fill="#555"><path d="M5.500 2.500h8.200L19 7.800v5.400h-2V9h-4.500V4.500H6.500v15H11v2H5.500c-.600 0-1-.400-1-1v-17c0-.600.400-1 1-1z"/><path d="M22.900 18.700l-1.200-.900c0-.300 0-.500 0-.800l1.200-.900-1.200-2.100-1.400.600c-.200-.200-.500-.300-.700-.400l-.200-1.500h-2.400l-.200 1.500c-.300.100-.500.200-.700.400l-1.400-.600-1.200 2.100 1.200.900c0 .300 0 .500 0 .800l-1.200.900 1.200 2.100 1.400-.600c.200.200.500.300.700.400l.200 1.500h2.400l.200-1.500c.300-.100.500-.200.700-.400l1.400.600zM18.200 19c-.900 0-1.600-.700-1.600-1.600s.700-1.600 1.600-1.600 1.600.700 1.600 1.600-.700 1.600-1.600 1.600z"/></svg><span class="t" style="left:1332.75px;top:12px;transform:scaleX(0.94);">Entreprenad</span></div>
<div class="r" style="top:202px;height:38px"><svg class="i" style="left:13px;top:11px" width="15" height="15" viewBox="0 0 24 24" fill="#d4642c"><path d="M10 20v-6h4v6h5v-8h3L12 3 2 12h3v8z"/></svg><span class="t" style="left:30.6px;top:12px;transform:scaleX(0.939);">Ekens företagscenter</span><span class="t" style="left:186.88px;top:12px;transform:scaleX(0.9293);">988</span><svg class="i" style="left:313.8px;top:10.6px" width="16.4" height="16.4" viewBox="0 0 24 24" fill="#555"><path d="M12 2C6.48 2 2 6.48 2 12s4.48 10 10 10 10-4.48 10-10S17.52 2 12 2zm0 3c1.66 0 3 1.34 3 3s-1.34 3-3 3-3-1.34-3-3 1.34-3 3-3zm0 14.2c-2.5 0-4.71-1.28-6-3.22.03-1.99 4-3.08 6-3.08 1.99 0 5.97 1.09 6 3.08-1.29 1.94-3.5 3.22-6 3.22z"/></svg><span class="t" style="left:332.4px;top:12px;transform:scaleX(0.8034);">EA</span><svg class="i" style="left:378px;top:11px" width="15" height="15" viewBox="0 0 24 24" fill="#3fae4f"><path d="M19 3H5c-1.1 0-2 .9-2 2v14c0 1.1.9 2 2 2h14c1.1 0 2-.9 2-2V5c0-1.1-.9-2-2-2zm-5.97 4.06L14.09 6l1.41 1.41L16.91 6l1.06 1.06-1.41 1.41 1.41 1.41-1.06 1.06-1.41-1.4-1.41 1.41-1.06-1.06 1.41-1.41-1.41-1.42zm-6.78.66h5v1.5h-5v-1.5zM11.5 16h-2v2H8v-2H6v-1.5h2v-2h1.5v2h2V16zm6.5 1.25h-5v-1.5h5v1.5zm0-2.5h-5v-1.5h5v1.5z"/></svg><span class="t" style="left:395.74px;top:12px;transform:scaleX(0.9668);">Nybyggnation av huskropp Syd</span><span class="t" style="left:692.0px;top:12px;transform:scaleX(0.94);">Godkänd</span><span class="t" style="left:835.9px;top:12px;transform:scaleX(0.94);">230 000 kr</span><svg class="i" style="left:908.7px;top:12px" width="13" height="13" viewBox="0 0 24 24" fill="#f5a10c"><path d="M19.48 12.35c-1.57-4.08-7.16-4.3-5.81-10.23.1-.44-.37-.78-.75-.55C9.29 3.71 6.68 8 8.87 13.62c.18.46-.36.89-.75.59-1.81-1.37-2-3.34-1.840-4.750.06-.52-.62-.77-.91-.34C4.69 10.160 4 11.840 4 14.370c.38 5.600 5.110 7.320 6.810 7.540 2.430.310 5.060-.140 6.950-1.870 2.080-1.930 2.840-5.010 1.720-7.690zm-9.280 5.030c1.440-.350 2.180-1.390 2.380-2.310.33-1.430-.96-2.830-.09-5.090.33 1.870 3.270 3.040 3.270 5.080.08 2.530-2.660 4.700-5.560 2.320z"/></svg><svg class="i" style="left:931.7px;top:12px" width="13" height="13" viewBox="0 0 24 24" fill="#f5a10c"><path d="M19.48 12.35c-1.57-4.08-7.16-4.3-5.81-10.23.1-.44-.37-.78-.75-.55C9.29 3.71 6.68 8 8.87 13.62c.18.46-.36.89-.75.59-1.81-1.37-2-3.34-1.840-4.750.06-.52-.62-.77-.91-.34C4.69 10.160 4 11.840 4 14.370c.38 5.600 5.110 7.320 6.810 7.540 2.430.310 5.060-.140 6.950-1.870 2.080-1.930 2.840-5.010 1.720-7.690zm-9.280 5.030c1.440-.350 2.180-1.390 2.380-2.310.33-1.430-.96-2.830-.09-5.090.33 1.870 3.270 3.040 3.270 5.080.08 2.530-2.660 4.700-5.560 2.320z"/></svg><svg class="i" style="left:954.7px;top:12px" width="13" height="13" viewBox="0 0 24 24" fill="#f5a10c"><path d="M19.48 12.35c-1.57-4.08-7.16-4.3-5.81-10.23.1-.44-.37-.78-.75-.55C9.29 3.71 6.68 8 8.87 13.62c.18.46-.36.89-.75.59-1.81-1.37-2-3.34-1.840-4.750.06-.52-.62-.77-.91-.34C4.69 10.160 4 11.840 4 14.370c.38 5.600 5.110 7.320 6.810 7.540 2.430.310 5.060-.140 6.950-1.870 2.080-1.930 2.840-5.010 1.720-7.690zm-9.280 5.030c1.440-.350 2.180-1.390 2.380-2.310.33-1.430-.96-2.830-.09-5.090.33 1.870 3.270 3.040 3.270 5.080.08 2.530-2.660 4.700-5.560 2.320z"/></svg><div class="clip" style="left:992px;width:313.4px;height:37px"><span class="t" style="left:5.2px;top:12px;transform:scaleX(0.9699);">2023-02-01 - 1014 - Nybyggnation av huskropp Syd</span></div><svg class="i" style="left:1314.1px;top:10.3px" width="16.7" height="16.7" viewBox="0 0 24 24" fill="#555"><path d="M5.500 2.500h8.200L19 7.800v5.400h-2V9h-4.500V4.500H6.500v15H11v2H5.500c-.600 0-1-.400-1-1v-17c0-.600.400-1 1-1z"/><path d="M22.900 18.700l-1.200-.900c0-.300 0-.500 0-.800l1.200-.900-1.200-2.100-1.400.600c-.200-.200-.500-.300-.700-.400l-.200-1.500h-2.400l-.200 1.500c-.300.100-.500.200-.700.400l-1.400-.600-1.200 2.100 1.200.900c0 .300 0 .500 0 .800l-1.200.900 1.200 2.100 1.400-.600c.200.200.500.300.700.400l.200 1.500h2.400l.200-1.500c.300-.100.500-.200.700-.400l1.400.600zM18.200 19c-.900 0-1.600-.700-1.600-1.600s.700-1.600 1.600-1.600 1.600.700 1.600 1.600-.700 1.600-1.600 1.600z"/></svg><span class="t" style="left:1332.75px;top:12px;transform:scaleX(0.94);">Entreprenad</span></div>
<div class="r" style="top:240px;height:39px"><svg class="i" style="left:13px;top:12px" width="15" height="15" viewBox="0 0 24 24" fill="#d4642c"><path d="M10 20v-6h4v6h5v-8h3L12 3 2 12h3v8z"/></svg><span class="t" style="left:30.6px;top:13px;transform:scaleX(0.939);">Ekens företagscenter</span><span class="t" style="left:186.88px;top:13px;transform:scaleX(0.9293);">988</span><svg class="i" style="left:313.8px;top:11.6px" width="16.4" height="16.4" viewBox="0 0 24 24" fill="#555"><path d="M12 2C6.48 2 2 6.48 2 12s4.48 10 10 10 10-4.48 10-10S17.52 2 12 2zm0 3c1.66 0 3 1.34 3 3s-1.34 3-3 3-3-1.34-3-3 1.34-3 3-3zm0 14.2c-2.5 0-4.71-1.28-6-3.22.03-1.99 4-3.08 6-3.08 1.99 0 5.97 1.09 6 3.08-1.29 1.94-3.5 3.22-6 3.22z"/></svg><span class="t" style="left:332.4px;top:13px;transform:scaleX(0.8034);">EA</span><svg class="i" style="left:378px;top:12px" width="15" height="15" viewBox="0 0 24 24" fill="#a9c3f3"><path d="M19 3H5c-1.1 0-2 .9-2 2v14c0 1.1.9 2 2 2h14c1.1 0 2-.9 2-2V5c0-1.1-.9-2-2-2zm-5.97 4.06L14.09 6l1.41 1.41L16.91 6l1.06 1.06-1.41 1.41 1.41 1.41-1.06 1.06-1.41-1.4-1.41 1.41-1.06-1.06 1.41-1.41-1.41-1.42zm-6.78.66h5v1.5h-5v-1.5zM11.5 16h-2v2H8v-2H6v-1.5h2v-2h1.5v2h2V16zm6.5 1.25h-5v-1.5h5v1.5zm0-2.5h-5v-1.5h5v1.5z"/></svg><span class="t" style="left:395.74px;top:13px;transform:scaleX(0.9691);">Projekt utan kalkyl först</span><span class="t" style="left:692.0px;top:13px;transform:scaleX(0.94);">Förfrågan</span><span class="t" style="left:836.06px;top:13px;transform:scaleX(0.934);">100 000 kr</span><svg class="i" style="left:908.7px;top:13px" width="13" height="13" viewBox="0 0 24 24" fill="#cbcbcb"><path d="M19.48 12.35c-1.57-4.08-7.16-4.3-5.81-10.23.1-.44-.37-.78-.75-.55C9.29 3.71 6.68 8 8.87 13.62c.18.46-.36.89-.75.59-1.81-1.37-2-3.34-1.840-4.750.06-.52-.62-.77-.91-.34C4.69 10.160 4 11.840 4 14.370c.38 5.600 5.110 7.320 6.810 7.540 2.430.310 5.060-.140 6.950-1.870 2.080-1.930 2.840-5.010 1.720-7.690zm-9.280 5.030c1.440-.350 2.180-1.390 2.380-2.310.33-1.430-.96-2.830-.09-5.090.33 1.870 3.270 3.040 3.270 5.080.08 2.530-2.660 4.700-5.560 2.320z"/></svg><svg class="i" style="left:931.7px;top:13px" width="13" height="13" viewBox="0 0 24 24" fill="#cbcbcb"><path d="M19.48 12.35c-1.57-4.08-7.16-4.3-5.81-10.23.1-.44-.37-.78-.75-.55C9.29 3.71 6.68 8 8.87 13.62c.18.46-.36.89-.75.59-1.81-1.37-2-3.34-1.840-4.750.06-.52-.62-.77-.91-.34C4.69 10.160 4 11.840 4 14.370c.38 5.600 5.110 7.320 6.810 7.540 2.430.310 5.060-.140 6.950-1.870 2.080-1.930 2.840-5.010 1.720-7.690zm-9.280 5.030c1.440-.350 2.180-1.390 2.380-2.310.33-1.430-.96-2.830-.09-5.090.33 1.870 3.270 3.040 3.270 5.080.08 2.530-2.660 4.700-5.560 2.320z"/></svg><svg class="i" style="left:954.7px;top:13px" width="13" height="13" viewBox="0 0 24 24" fill="#cbcbcb"><path d="M19.48 12.35c-1.57-4.08-7.16-4.3-5.81-10.23.1-.44-.37-.78-.75-.55C9.29 3.71 6.68 8 8.87 13.62c.18.46-.36.89-.75.59-1.81-1.37-2-3.34-1.840-4.750.06-.52-.62-.77-.91-.34C4.69 10.160 4 11.840 4 14.370c.38 5.600 5.110 7.320 6.810 7.540 2.430.310 5.060-.140 6.950-1.870 2.080-1.930 2.840-5.010 1.720-7.690zm-9.280 5.030c1.440-.350 2.180-1.390 2.380-2.310.33-1.430-.96-2.830-.09-5.090.33 1.870 3.270 3.040 3.270 5.080.08 2.530-2.660 4.700-5.560 2.320z"/></svg><div class="clip" style="left:992px;width:313.4px;height:38px"><span class="t" style="left:5.38px;top:13px;transform:scaleX(0.9682);">- 1016 - Projekt utan kalkyl först</span></div><svg class="i" style="left:1314.1px;top:11.3px" width="16.7" height="16.7" viewBox="0 0 24 24" fill="#555"><path d="M5.500 2.500h8.200L19 7.800v5.400h-2V9h-4.500V4.500H6.500v15H11v2H5.500c-.600 0-1-.400-1-1v-17c0-.600.400-1 1-1z"/><path d="M22.900 18.700l-1.200-.900c0-.300 0-.500 0-.800l1.200-.900-1.200-2.100-1.400.600c-.200-.200-.500-.300-.700-.400l-.200-1.500h-2.400l-.200 1.500c-.300.100-.500.200-.700.400l-1.400-.600-1.200 2.100 1.200.900c0 .300 0 .500 0 .800l-1.200.900 1.200 2.100 1.400-.600c.200.200.500.300.700.400l.200 1.500h2.400l.200-1.500c.300-.100.500-.200.700-.400l1.400.600zM18.200 19c-.900 0-1.600-.700-1.600-1.600s.700-1.600 1.600-1.600 1.600.700 1.600 1.600-.700 1.600-1.600 1.600z"/></svg><span class="t" style="left:1332.75px;top:13px;transform:scaleX(0.94);">Entreprenad</span></div>
<div class="r" style="top:279px;height:39px"><svg class="i" style="left:13px;top:12px" width="15" height="15" viewBox="0 0 24 24" fill="#d4642c"><path d="M10 20v-6h4v6h5v-8h3L12 3 2 12h3v8z"/></svg><span class="t" style="left:30.6px;top:13px;transform:scaleX(0.9112);">Sven Karlsson</span><span class="t" style="left:187.08px;top:13px;transform:scaleX(0.9112);">1044</span><svg class="i" style="left:313.8px;top:11.6px" width="16.4" height="16.4" viewBox="0 0 24 24" fill="#555"><path d="M12 2C6.48 2 2 6.48 2 12s4.48 10 10 10 10-4.48 10-10S17.52 2 12 2zm0 3c1.66 0 3 1.34 3 3s-1.34 3-3 3-3-1.34-3-3 1.34-3 3-3zm0 14.2c-2.5 0-4.71-1.28-6-3.22.03-1.99 4-3.08 6-3.08 1.99 0 5.97 1.09 6 3.08-1.29 1.94-3.5 3.22-6 3.22z"/></svg><span class="t" style="left:332.4px;top:13px;transform:scaleX(0.8034);">EA</span><svg class="i" style="left:378px;top:12px" width="15" height="15" viewBox="0 0 24 24" fill="#3fae4f"><path d="M19 3H5c-1.1 0-2 .9-2 2v14c0 1.1.9 2 2 2h14c1.1 0 2-.9 2-2V5c0-1.1-.9-2-2-2zm-5.97 4.06L14.09 6l1.41 1.41L16.91 6l1.06 1.06-1.41 1.41 1.41 1.41-1.06 1.06-1.41-1.4-1.41 1.41-1.06-1.06 1.41-1.41-1.41-1.42zm-6.78.66h5v1.5h-5v-1.5zM11.5 16h-2v2H8v-2H6v-1.5h2v-2h1.5v2h2V16zm6.5 1.25h-5v-1.5h5v1.5zm0-2.5h-5v-1.5h5v1.5z"/></svg><span class="t" style="left:395.74px;top:13px;transform:scaleX(0.9488);">Utbyte av värmesystem</span><span class="t" style="left:692.0px;top:13px;transform:scaleX(0.94);">Godkänd</span><span class="t" style="left:842.2px;top:13px;transform:scaleX(0.94);">90 000 kr</span><svg class="i" style="left:908.7px;top:13px" width="13" height="13" viewBox="0 0 24 24" fill="#f5a10c"><path d="M19.48 12.35c-1.57-4.08-7.16-4.3-5.81-10.23.1-.44-.37-.78-.75-.55C9.29 3.71 6.68 8 8.87 13.62c.18.46-.36.89-.75.59-1.81-1.37-2-3.34-1.840-4.750.06-.52-.62-.77-.91-.34C4.69 10.160 4 11.840 4 14.370c.38 5.600 5.110 7.320 6.810 7.540 2.430.310 5.060-.140 6.950-1.870 2.080-1.930 2.840-5.010 1.720-7.690zm-9.280 5.030c1.440-.350 2.180-1.390 2.380-2.310.33-1.430-.96-2.830-.09-5.090.33 1.870 3.270 3.040 3.270 5.080.08 2.530-2.660 4.700-5.560 2.320z"/></svg><svg class="i" style="left:931.7px;top:13px" width="13" height="13" viewBox="0 0 24 24" fill="#f5a10c"><path d="M19.48 12.35c-1.57-4.08-7.16-4.3-5.81-10.23.1-.44-.37-.78-.75-.55C9.29 3.71 6.68 8 8.87 13.62c.18.46-.36.89-.75.59-1.81-1.37-2-3.34-1.840-4.750.06-.52-.62-.77-.91-.34C4.69 10.160 4 11.840 4 14.370c.38 5.600 5.110 7.320 6.810 7.540 2.430.310 5.060-.140 6.950-1.870 2.080-1.930 2.840-5.010 1.720-7.690zm-9.280 5.030c1.440-.350 2.180-1.390 2.380-2.310.33-1.430-.96-2.830-.09-5.090.33 1.870 3.270 3.040 3.270 5.080.08 2.530-2.660 4.700-5.560 2.320z"/></svg><svg class="i" style="left:954.7px;top:13px" width="13" height="13" viewBox="0 0 24 24" fill="#f5a10c"><path d="M19.48 12.35c-1.57-4.08-7.16-4.3-5.81-10.23.1-.44-.37-.78-.75-.55C9.29 3.71 6.68 8 8.87 13.62c.18.46-.36.89-.75.59-1.81-1.37-2-3.34-1.840-4.750.06-.52-.62-.77-.91-.34C4.69 10.160 4 11.840 4 14.370c.38 5.600 5.110 7.320 6.810 7.540 2.430.310 5.060-.140 6.950-1.870 2.080-1.930 2.840-5.010 1.720-7.690zm-9.280 5.030c1.440-.350 2.180-1.390 2.380-2.310.33-1.430-.96-2.830-.09-5.090.33 1.870 3.270 3.040 3.270 5.080.08 2.530-2.660 4.700-5.560 2.320z"/></svg><div class="clip" style="left:992px;width:313.4px;height:38px"><span class="t" style="left:5.2px;top:13px;transform:scaleX(0.9658);">2022-11-25 - 1007 - Utbyte av värmesystem</span></div><svg class="i" style="left:1314.1px;top:11.3px" width="16.7" height="16.7" viewBox="0 0 24 24" fill="#555"><path d="M5.500 2.500h8.200L19 7.800v5.400h-2V9h-4.500V4.500H6.500v15H11v2H5.500c-.600 0-1-.400-1-1v-17c0-.600.400-1 1-1z"/><path d="M22.900 18.700l-1.200-.900c0-.300 0-.500 0-.800l1.200-.900-1.200-2.100-1.400.600c-.200-.200-.500-.300-.700-.400l-.200-1.500h-2.400l-.200 1.500c-.300.100-.500.200-.700.400l-1.400-.600-1.200 2.100 1.200.900c0 .300 0 .500 0 .800l-1.200.900 1.200 2.100 1.400-.600c.200.200.500.300.700.400l.200 1.500h2.400l.200-1.500c.300-.100.500-.200.700-.400l1.400.600zM18.200 19c-.900 0-1.600-.700-1.600-1.600s.700-1.600 1.600-1.600 1.600.700 1.600 1.600-.700 1.600-1.600 1.600z"/></svg><span class="t" style="left:1332.6px;top:13px;transform:scaleX(0.9517);">Installation av Solceller - Privat</span></div>
<div class="r" style="top:318px;height:39px"><svg class="i" style="left:13px;top:12px" width="15" height="15" viewBox="0 0 24 24" fill="#d4642c"><path d="M10 20v-6h4v6h5v-8h3L12 3 2 12h3v8z"/></svg><span class="t" style="left:30.6px;top:13px;transform:scaleX(0.9235);">VentKarlssons</span><span class="t" style="left:187.08px;top:13px;transform:scaleX(0.9112);">1453</span><svg class="i" style="left:313.8px;top:11.6px" width="16.4" height="16.4" viewBox="0 0 24 24" fill="#555"><path d="M12 2C6.48 2 2 6.48 2 12s4.48 10 10 10 10-4.48 10-10S17.52 2 12 2zm0 3c1.66 0 3 1.34 3 3s-1.34 3-3 3-3-1.34-3-3 1.34-3 3-3zm0 14.2c-2.5 0-4.71-1.28-6-3.22.03-1.99 4-3.08 6-3.08 1.99 0 5.97 1.09 6 3.08-1.29 1.94-3.5 3.22-6 3.22z"/></svg><span class="t" style="left:332.4px;top:13px;transform:scaleX(0.8034);">EA</span><svg class="i" style="left:378px;top:12px" width="15" height="15" viewBox="0 0 24 24" fill="#3fae4f"><path d="M19 3H5c-1.1 0-2 .9-2 2v14c0 1.1.9 2 2 2h14c1.1 0 2-.9 2-2V5c0-1.1-.9-2-2-2zm-5.97 4.06L14.09 6l1.41 1.41L16.91 6l1.06 1.06-1.41 1.41 1.41 1.41-1.06 1.06-1.41-1.4-1.41 1.41-1.06-1.06 1.41-1.41-1.41-1.42zm-6.78.66h5v1.5h-5v-1.5zM11.5 16h-2v2H8v-2H6v-1.5h2v-2h1.5v2h2V16zm6.5 1.25h-5v-1.5h5v1.5zm0-2.5h-5v-1.5h5v1.5z"/></svg><span class="t" style="left:395.74px;top:13px;transform:scaleX(0.9743);">Utbyte löpande</span><span class="t" style="left:692.0px;top:13px;transform:scaleX(0.94);">Godkänd</span><span class="t" style="left:835.9px;top:13px;transform:scaleX(0.94);">200 000 kr</span><svg class="i" style="left:908.7px;top:13px" width="13" height="13" viewBox="0 0 24 24" fill="#cbcbcb"><path d="M19.48 12.35c-1.57-4.08-7.16-4.3-5.81-10.23.1-.44-.37-.78-.75-.55C9.29 3.71 6.68 8 8.87 13.62c.18.46-.36.89-.75.59-1.81-1.37-2-3.34-1.840-4.750.06-.52-.62-.77-.91-.34C4.69 10.160 4 11.840 4 14.370c.38 5.600 5.110 7.320 6.810 7.540 2.430.310 5.060-.140 6.950-1.870 2.080-1.930 2.840-5.010 1.720-7.690zm-9.280 5.030c1.440-.350 2.180-1.390 2.380-2.310.33-1.430-.96-2.830-.09-5.090.33 1.870 3.270 3.040 3.270 5.080.08 2.530-2.660 4.700-5.560 2.320z"/></svg><svg class="i" style="left:931.7px;top:13px" width="13" height="13" viewBox="0 0 24 24" fill="#cbcbcb"><path d="M19.48 12.35c-1.57-4.08-7.16-4.3-5.81-10.23.1-.44-.37-.78-.75-.55C9.29 3.71 6.68 8 8.87 13.62c.18.46-.36.89-.75.59-1.81-1.37-2-3.34-1.840-4.750.06-.52-.62-.77-.91-.34C4.69 10.160 4 11.840 4 14.370c.38 5.600 5.110 7.320 6.810 7.540 2.430.310 5.060-.140 6.950-1.870 2.080-1.930 2.840-5.010 1.720-7.690zm-9.280 5.030c1.440-.350 2.180-1.390 2.380-2.310.33-1.430-.96-2.830-.09-5.090.33 1.870 3.270 3.040 3.270 5.080.08 2.530-2.660 4.700-5.560 2.320z"/></svg><svg class="i" style="left:954.7px;top:13px" width="13" height="13" viewBox="0 0 24 24" fill="#cbcbcb"><path d="M19.48 12.35c-1.57-4.08-7.16-4.3-5.81-10.23.1-.44-.37-.78-.75-.55C9.29 3.71 6.68 8 8.87 13.62c.18.46-.36.89-.75.59-1.81-1.37-2-3.34-1.840-4.750.06-.52-.62-.77-.91-.34C4.69 10.160 4 11.840 4 14.370c.38 5.600 5.110 7.320 6.810 7.540 2.430.310 5.060-.140 6.950-1.870 2.080-1.930 2.840-5.010 1.720-7.690zm-9.280 5.030c1.440-.350 2.180-1.390 2.380-2.310.33-1.430-.96-2.830-.09-5.090.33 1.870 3.270 3.040 3.270 5.080.08 2.530-2.660 4.700-5.560 2.320z"/></svg><div class="clip" style="left:992px;width:313.4px;height:38px"><span class="t" style="left:5.2px;top:13px;transform:scaleX(0.973);">2023-01-18 - 10073 - Aktiv</span></div><svg class="i" style="left:1314.1px;top:11.3px" width="16.7" height="16.7" viewBox="0 0 24 24" fill="#555"><path d="M5.500 2.500h8.200L19 7.800v5.400h-2V9h-4.500V4.500H6.500v15H11v2H5.500c-.600 0-1-.400-1-1v-17c0-.600.400-1 1-1z"/><path d="M22.900 18.700l-1.200-.900c0-.300 0-.500 0-.800l1.200-.900-1.200-2.100-1.400.600c-.200-.200-.500-.300-.700-.400l-.200-1.500h-2.400l-.200 1.500c-.300.100-.500.200-.700.400l-1.400-.600-1.200 2.100 1.200.900c0 .300 0 .500 0 .800l-1.200.900 1.200 2.100 1.400-.600c.200.200.500.300.700.400l.200 1.500h2.400l.200-1.500c.300-.100.500-.200.700-.400l1.400.600zM18.200 19c-.900 0-1.600-.700-1.600-1.600s.700-1.600 1.600-1.600 1.600.700 1.600 1.600-.700 1.600-1.600 1.600z"/></svg><span class="t" style="left:1332.75px;top:13px;transform:scaleX(0.94);">Ordrar</span></div>
<div class="r" style="top:357px;height:39px"><svg class="i" style="left:13px;top:12px" width="15" height="15" viewBox="0 0 24 24" fill="#d4642c"><path d="M10 20v-6h4v6h5v-8h3L12 3 2 12h3v8z"/></svg><span class="t" style="left:30.6px;top:12px;transform:scaleX(0.939);">Ekens företagscenter</span><span class="t" style="left:186.88px;top:12px;transform:scaleX(0.932);">3423</span><svg class="i" style="left:313.8px;top:11.6px" width="16.4" height="16.4" viewBox="0 0 24 24" fill="#555"><path d="M12 2C6.48 2 2 6.48 2 12s4.48 10 10 10 10-4.48 10-10S17.52 2 12 2zm0 3c1.66 0 3 1.34 3 3s-1.34 3-3 3-3-1.34-3-3 1.34-3 3-3zm0 14.2c-2.5 0-4.71-1.28-6-3.22.03-1.99 4-3.08 6-3.08 1.99 0 5.97 1.09 6 3.08-1.29 1.94-3.5 3.22-6 3.22z"/></svg><span class="t" style="left:332.4px;top:12px;transform:scaleX(0.8034);">EA</span><svg class="i" style="left:378px;top:12px" width="15" height="15" viewBox="0 0 24 24" fill="#f6c927"><path d="M19 3H5c-1.1 0-2 .9-2 2v14c0 1.1.9 2 2 2h14c1.1 0 2-.9 2-2V5c0-1.1-.9-2-2-2zm-5.97 4.06L14.09 6l1.41 1.41L16.91 6l1.06 1.06-1.41 1.41 1.41 1.41-1.06 1.06-1.41-1.4-1.41 1.41-1.06-1.06 1.41-1.41-1.41-1.42zm-6.78.66h5v1.5h-5v-1.5zM11.5 16h-2v2H8v-2H6v-1.5h2v-2h1.5v2h2V16zm6.5 1.25h-5v-1.5h5v1.5zm0-2.5h-5v-1.5h5v1.5z"/></svg><span class="t" style="left:395.74px;top:12px;transform:scaleX(0.9681);">Kyla/Vent för träningslokal</span><span class="t" style="left:691.88px;top:12px;transform:scaleX(0.9247);">Skickad</span><span class="t" style="left:836.06px;top:12px;transform:scaleX(0.944);">114 050 kr</span><svg class="i" style="left:908.7px;top:13px" width="13" height="13" viewBox="0 0 24 24" fill="#cbcbcb"><path d="M19.48 12.35c-1.57-4.08-7.16-4.3-5.81-10.23.1-.44-.37-.78-.75-.55C9.29 3.71 6.68 8 8.87 13.62c.18.46-.36.89-.75.59-1.81-1.37-2-3.34-1.840-4.750.06-.52-.62-.77-.91-.34C4.69 10.160 4 11.840 4 14.370c.38 5.600 5.110 7.320 6.810 7.540 2.430.310 5.060-.140 6.950-1.870 2.080-1.930 2.840-5.010 1.720-7.690zm-9.280 5.030c1.440-.350 2.180-1.390 2.380-2.310.33-1.430-.96-2.830-.09-5.090.33 1.870 3.270 3.040 3.270 5.080.08 2.530-2.660 4.700-5.560 2.320z"/></svg><svg class="i" style="left:931.7px;top:13px" width="13" height="13" viewBox="0 0 24 24" fill="#cbcbcb"><path d="M19.48 12.35c-1.57-4.08-7.16-4.3-5.81-10.23.1-.44-.37-.78-.75-.55C9.29 3.71 6.68 8 8.87 13.62c.18.46-.36.89-.75.59-1.81-1.37-2-3.34-1.840-4.750.06-.52-.62-.77-.91-.34C4.69 10.160 4 11.840 4 14.370c.38 5.600 5.110 7.320 6.810 7.540 2.430.310 5.060-.140 6.950-1.870 2.080-1.930 2.840-5.010 1.720-7.690zm-9.280 5.030c1.440-.350 2.180-1.390 2.380-2.310.33-1.430-.96-2.830-.09-5.090.33 1.870 3.270 3.040 3.270 5.080.08 2.530-2.660 4.700-5.560 2.320z"/></svg><svg class="i" style="left:954.7px;top:13px" width="13" height="13" viewBox="0 0 24 24" fill="#cbcbcb"><path d="M19.48 12.35c-1.57-4.08-7.16-4.3-5.81-10.23.1-.44-.37-.78-.75-.55C9.29 3.71 6.68 8 8.87 13.62c.18.46-.36.89-.75.59-1.81-1.37-2-3.34-1.840-4.750.06-.52-.62-.77-.91-.34C4.69 10.160 4 11.840 4 14.370c.38 5.600 5.110 7.320 6.810 7.540 2.430.310 5.060-.140 6.950-1.870 2.080-1.930 2.840-5.010 1.720-7.690zm-9.280 5.030c1.440-.350 2.180-1.390 2.380-2.310.33-1.430-.96-2.830-.09-5.090.33 1.870 3.270 3.040 3.270 5.080.08 2.530-2.660 4.700-5.560 2.320z"/></svg><div class="clip" style="left:992px;width:313.4px;height:38px"><span class="t" style="left:5.5px;top:11px;transform:scaleX(0.94);">-</span></div><svg class="i" style="left:1314.1px;top:11.3px" width="16.7" height="16.7" viewBox="0 0 24 24" fill="#555"><path d="M5.500 2.500h8.200L19 7.800v5.400h-2V9h-4.500V4.500H6.500v15H11v2H5.500c-.600 0-1-.400-1-1v-17c0-.600.400-1 1-1z"/><path d="M22.900 18.700l-1.200-.900c0-.300 0-.500 0-.800l1.200-.900-1.200-2.100-1.400.600c-.200-.200-.500-.300-.700-.400l-.200-1.500h-2.400l-.200 1.500c-.300.100-.500.200-.700.400l-1.400-.600-1.200 2.100 1.200.900c0 .300 0 .500 0 .800l-1.200.900 1.200 2.100 1.400-.600c.200.200.500.300.700.400l.200 1.500h2.400l.200-1.500c.300-.100.500-.200.700-.400l1.400.600zM18.200 19c-.900 0-1.600-.700-1.600-1.600s.700-1.600 1.600-1.600 1.600.700 1.600 1.600-.700 1.600-1.600 1.600z"/></svg><span class="t" style="left:1332.6px;top:12px;transform:scaleX(0.9373);">Standardmall Kyla</span></div>
<div class="r" style="top:396px;height:38px"><svg class="i" style="left:13px;top:11px" width="15" height="15" viewBox="0 0 24 24" fill="#d4642c"><path d="M10 20v-6h4v6h5v-8h3L12 3 2 12h3v8z"/></svg><span class="t" style="left:30.72px;top:12px;transform:scaleX(0.965);">Apotek</span><span class="t" style="left:186.88px;top:12px;transform:scaleX(0.932);">7088</span><svg class="i" style="left:313.8px;top:10.6px" width="16.4" height="16.4" viewBox="0 0 24 24" fill="#555"><path d="M12 2C6.48 2 2 6.48 2 12s4.48 10 10 10 10-4.48 10-10S17.52 2 12 2zm0 3c1.66 0 3 1.34 3 3s-1.34 3-3 3-3-1.34-3-3 1.34-3 3-3zm0 14.2c-2.5 0-4.71-1.28-6-3.22.03-1.99 4-3.08 6-3.08 1.99 0 5.97 1.09 6 3.08-1.29 1.94-3.5 3.22-6 3.22z"/></svg><span class="t" style="left:332.4px;top:12px;transform:scaleX(0.8034);">EA</span><svg class="i" style="left:378px;top:11px" width="15" height="15" viewBox="0 0 24 24" fill="#3fae4f"><path d="M19 3H5c-1.1 0-2 .9-2 2v14c0 1.1.9 2 2 2h14c1.1 0 2-.9 2-2V5c0-1.1-.9-2-2-2zm-5.97 4.06L14.09 6l1.41 1.41L16.91 6l1.06 1.06-1.41 1.41 1.41 1.41-1.06 1.06-1.41-1.4-1.41 1.41-1.06-1.06 1.41-1.41-1.41-1.42zm-6.78.66h5v1.5h-5v-1.5zM11.5 16h-2v2H8v-2H6v-1.5h2v-2h1.5v2h2V16zm6.5 1.25h-5v-1.5h5v1.5zm0-2.5h-5v-1.5h5v1.5z"/></svg><span class="t" style="left:395.74px;top:12px;transform:scaleX(0.9609);">Instalasjon av AC m not o artikelrader</span><span class="t" style="left:692.0px;top:12px;transform:scaleX(0.94);">Godkänd</span><span class="t" style="left:836.06px;top:12px;transform:scaleX(0.934);">150 000 kr</span><svg class="i" style="left:908.7px;top:12px" width="13" height="13" viewBox="0 0 24 24" fill="#f5a10c"><path d="M19.48 12.35c-1.57-4.08-7.16-4.3-5.81-10.23.1-.44-.37-.78-.75-.55C9.29 3.71 6.68 8 8.87 13.62c.18.46-.36.89-.75.59-1.81-1.37-2-3.34-1.840-4.750.06-.52-.62-.77-.91-.34C4.69 10.160 4 11.840 4 14.370c.38 5.600 5.110 7.320 6.810 7.540 2.430.310 5.060-.140 6.950-1.870 2.080-1.930 2.840-5.010 1.720-7.690zm-9.280 5.030c1.440-.350 2.180-1.390 2.380-2.310.33-1.430-.96-2.830-.09-5.090.33 1.870 3.270 3.040 3.270 5.080.08 2.530-2.660 4.700-5.560 2.320z"/></svg><svg class="i" style="left:931.7px;top:12px" width="13" height="13" viewBox="0 0 24 24" fill="#f5a10c"><path d="M19.48 12.35c-1.57-4.08-7.16-4.3-5.81-10.23.1-.44-.37-.78-.75-.55C9.29 3.71 6.68 8 8.87 13.62c.18.46-.36.89-.75.59-1.81-1.37-2-3.34-1.840-4.750.06-.52-.62-.77-.91-.34C4.69 10.160 4 11.840 4 14.370c.38 5.600 5.110 7.320 6.810 7.540 2.430.310 5.060-.140 6.950-1.870 2.080-1.930 2.840-5.010 1.720-7.690zm-9.280 5.030c1.440-.350 2.180-1.390 2.380-2.310.33-1.430-.96-2.830-.09-5.090.33 1.870 3.270 3.040 3.270 5.080.08 2.530-2.660 4.700-5.560 2.320z"/></svg><svg class="i" style="left:954.7px;top:12px" width="13" height="13" viewBox="0 0 24 24" fill="#f5a10c"><path d="M19.48 12.35c-1.57-4.08-7.16-4.3-5.81-10.23.1-.44-.37-.78-.75-.55C9.29 3.71 6.68 8 8.87 13.62c.18.46-.36.89-.75.59-1.81-1.37-2-3.34-1.840-4.750.06-.52-.62-.77-.91-.34C4.69 10.160 4 11.840 4 14.370c.38 5.600 5.110 7.320 6.810 7.540 2.430.310 5.060-.140 6.950-1.870 2.080-1.930 2.840-5.010 1.720-7.690zm-9.280 5.030c1.440-.350 2.180-1.390 2.380-2.310.33-1.430-.96-2.830-.09-5.090.33 1.870 3.270 3.040 3.270 5.080.08 2.530-2.660 4.700-5.560 2.320z"/></svg><div class="clip" style="left:992px;width:313.4px;height:37px"><span class="t" style="left:5.2px;top:12px;transform:scaleX(0.9438);">2023-04-19 - 1020 - Instalasjon av AC m not o artikelrader</span></div><svg class="i" style="left:1314.1px;top:10.3px" width="16.7" height="16.7" viewBox="0 0 24 24" fill="#555"><path d="M5.500 2.500h8.200L19 7.800v5.400h-2V9h-4.500V4.500H6.500v15H11v2H5.500c-.600 0-1-.400-1-1v-17c0-.600.400-1 1-1z"/><path d="M22.900 18.700l-1.200-.900c0-.300 0-.500 0-.800l1.200-.900-1.200-2.100-1.400.600c-.200-.200-.500-.300-.700-.400l-.200-1.500h-2.400l-.200 1.500c-.300.100-.500.200-.700.400l-1.400-.600-1.200 2.100 1.200.900c0 .300 0 .500 0 .800l-1.200.900 1.200 2.100 1.400-.600c.200.200.500.300.700.400l.200 1.500h2.400l.200-1.500c.300-.100.500-.200.700-.400l1.400.600zM18.200 19c-.900 0-1.600-.700-1.600-1.600s.700-1.600 1.600-1.600 1.600.700 1.600 1.600-.700 1.600-1.600 1.600z"/></svg><span class="t" style="left:1332.48px;top:12px;transform:scaleX(0.9341);">NO - Entr - Fast Pris</span></div>
<div class="r" style="top:434px;height:39px"><svg class="i" style="left:13px;top:12px" width="15" height="15" viewBox="0 0 24 24" fill="#d4642c"><path d="M10 20v-6h4v6h5v-8h3L12 3 2 12h3v8z"/></svg><span class="t" style="left:30.72px;top:13px;transform:scaleX(0.965);">Apotek</span><span class="t" style="left:74.2px;top:13px;transform:scaleX(0.94);font-family:'DejaVu Sans',sans-serif;font-size:13.5px;">♥</span><span class="t" style="left:89.24px;top:13px;transform:scaleX(1.0121);">i Norge</span><span class="t" style="left:187.08px;top:13px;transform:scaleX(0.9548);">11256</span><svg class="i" style="left:313.8px;top:11.6px" width="16.4" height="16.4" viewBox="0 0 24 24" fill="#555"><path d="M12 2C6.48 2 2 6.48 2 12s4.48 10 10 10 10-4.48 10-10S17.52 2 12 2zm0 3c1.66 0 3 1.34 3 3s-1.34 3-3 3-3-1.34-3-3 1.34-3 3-3zm0 14.2c-2.5 0-4.71-1.28-6-3.22.03-1.99 4-3.08 6-3.08 1.99 0 5.97 1.09 6 3.08-1.29 1.94-3.5 3.22-6 3.22z"/></svg><span class="t" style="left:332.4px;top:13px;transform:scaleX(0.8034);">EA</span><svg class="i" style="left:378px;top:12px" width="15" height="15" viewBox="0 0 24 24" fill="#3fae4f"><path d="M19 3H5c-1.1 0-2 .9-2 2v14c0 1.1.9 2 2 2h14c1.1 0 2-.9 2-2V5c0-1.1-.9-2-2-2zm-5.97 4.06L14.09 6l1.41 1.41L16.91 6l1.06 1.06-1.41 1.41 1.41 1.41-1.06 1.06-1.41-1.4-1.41 1.41-1.06-1.06 1.41-1.41-1.41-1.42zm-6.78.66h5v1.5h-5v-1.5zM11.5 16h-2v2H8v-2H6v-1.5h2v-2h1.5v2h2V16zm6.5 1.25h-5v-1.5h5v1.5zm0-2.5h-5v-1.5h5v1.5z"/></svg><span class="t" style="left:395.8px;top:13px;transform:scaleX(0.9735);">Installasjon av kjølerom til Apotek</span><span class="t" style="left:692.0px;top:13px;transform:scaleX(0.94);">Godkänd</span><span class="t" style="left:835.9px;top:13px;transform:scaleX(0.94);">250 000 kr</span><svg class="i" style="left:908.7px;top:13px" width="13" height="13" viewBox="0 0 24 24" fill="#f5a10c"><path d="M19.48 12.35c-1.57-4.08-7.16-4.3-5.81-10.23.1-.44-.37-.78-.75-.55C9.29 3.71 6.68 8 8.87 13.62c.18.46-.36.89-.75.59-1.81-1.37-2-3.34-1.840-4.750.06-.52-.62-.77-.91-.34C4.69 10.160 4 11.840 4 14.370c.38 5.600 5.110 7.320 6.810 7.540 2.430.310 5.060-.140 6.950-1.870 2.080-1.930 2.840-5.010 1.720-7.690zm-9.280 5.030c1.440-.350 2.180-1.390 2.380-2.310.33-1.430-.96-2.830-.09-5.090.33 1.870 3.270 3.040 3.270 5.080.08 2.530-2.660 4.700-5.560 2.320z"/></svg><svg class="i" style="left:931.7px;top:13px" width="13" height="13" viewBox="0 0 24 24" fill="#f5a10c"><path d="M19.48 12.35c-1.57-4.08-7.16-4.3-5.81-10.23.1-.44-.37-.78-.75-.55C9.29 3.71 6.68 8 8.87 13.62c.18.46-.36.89-.75.59-1.81-1.37-2-3.34-1.840-4.750.06-.52-.62-.77-.91-.34C4.69 10.160 4 11.840 4 14.370c.38 5.600 5.110 7.320 6.810 7.540 2.430.310 5.060-.140 6.950-1.870 2.080-1.930 2.840-5.010 1.720-7.690zm-9.280 5.030c1.440-.350 2.180-1.390 2.380-2.310.33-1.430-.96-2.830-.09-5.090.33 1.870 3.270 3.040 3.270 5.080.08 2.530-2.660 4.700-5.560 2.320z"/></svg><svg class="i" style="left:954.7px;top:13px" width="13" height="13" viewBox="0 0 24 24" fill="#cbcbcb"><path d="M19.48 12.35c-1.57-4.08-7.16-4.3-5.81-10.23.1-.44-.37-.78-.75-.55C9.29 3.71 6.68 8 8.87 13.62c.18.46-.36.89-.75.59-1.81-1.37-2-3.34-1.840-4.750.06-.52-.62-.77-.91-.34C4.69 10.160 4 11.840 4 14.370c.38 5.600 5.110 7.320 6.810 7.540 2.430.310 5.060-.140 6.950-1.870 2.080-1.930 2.840-5.010 1.720-7.690zm-9.280 5.030c1.440-.350 2.180-1.390 2.380-2.310.33-1.430-.96-2.830-.09-5.090.33 1.870 3.270 3.040 3.270 5.080.08 2.530-2.660 4.700-5.560 2.320z"/></svg><div class="clip" style="left:992px;width:313.4px;height:38px"><span class="t" style="left:5.2px;top:13px;transform:scaleX(0.9737);">2023-04-15 - Installasjon av kjølerom til Apotek</span></div><svg class="i" style="left:1314.1px;top:11.3px" width="16.7" height="16.7" viewBox="0 0 24 24" fill="#555"><path d="M5.500 2.500h8.200L19 7.800v5.400h-2V9h-4.500V4.500H6.500v15H11v2H5.500c-.600 0-1-.400-1-1v-17c0-.600.400-1 1-1z"/><path d="M22.900 18.700l-1.200-.900c0-.300 0-.500 0-.800l1.200-.900-1.200-2.100-1.400.600c-.200-.200-.500-.300-.700-.400l-.200-1.500h-2.400l-.200 1.500c-.300.100-.500.200-.700.400l-1.400-.600-1.200 2.100 1.200.900c0 .300 0 .500 0 .800l-1.200.900 1.200 2.100 1.400-.600c.200.200.500.300.700.400l.200 1.500h2.400l.200-1.500c.300-.100.500-.200.700-.400l1.400.600zM18.200 19c-.900 0-1.600-.700-1.600-1.600s.700-1.600 1.600-1.600 1.600.700 1.600 1.600-.700 1.600-1.600 1.600z"/></svg><span class="t" style="left:1332.48px;top:13px;transform:scaleX(0.9341);">NO - Entr - Fast Pris</span></div>
<div class="r" style="top:473px;height:39px"><svg class="i" style="left:13px;top:12px" width="15" height="15" viewBox="0 0 24 24" fill="#d4642c"><path d="M10 20v-6h4v6h5v-8h3L12 3 2 12h3v8z"/></svg><span class="t" style="left:30.6px;top:13px;transform:scaleX(0.9296);">Stenkrossen</span><span class="t" style="left:187.08px;top:13px;transform:scaleX(0.9211);">13254</span><svg class="i" style="left:313.8px;top:11.6px" width="16.4" height="16.4" viewBox="0 0 24 24" fill="#555"><path d="M12 2C6.48 2 2 6.48 2 12s4.48 10 10 10 10-4.48 10-10S17.52 2 12 2zm0 3c1.66 0 3 1.34 3 3s-1.34 3-3 3-3-1.34-3-3 1.34-3 3-3zm0 14.2c-2.5 0-4.71-1.28-6-3.22.03-1.99 4-3.08 6-3.08 1.99 0 5.97 1.09 6 3.08-1.29 1.94-3.5 3.22-6 3.22z"/></svg><span class="t" style="left:332.4px;top:13px;transform:scaleX(0.8034);">EA</span><svg class="i" style="left:378px;top:12px" width="15" height="15" viewBox="0 0 24 24" fill="#3fae4f"><path d="M19 3H5c-1.1 0-2 .9-2 2v14c0 1.1.9 2 2 2h14c1.1 0 2-.9 2-2V5c0-1.1-.9-2-2-2zm-5.97 4.06L14.09 6l1.41 1.41L16.91 6l1.06 1.06-1.41 1.41 1.41 1.41-1.06 1.06-1.41-1.4-1.41 1.41-1.06-1.06 1.41-1.41-1.41-1.42zm-6.78.66h5v1.5h-5v-1.5zM11.5 16h-2v2H8v-2H6v-1.5h2v-2h1.5v2h2V16zm6.5 1.25h-5v-1.5h5v1.5zm0-2.5h-5v-1.5h5v1.5z"/></svg><span class="t" style="left:395.74px;top:13px;transform:scaleX(0.9767);">Installation av AC till kontor</span><span class="t" style="left:692.0px;top:13px;transform:scaleX(0.94);">Godkänd</span><span class="t" style="left:842.2px;top:13px;transform:scaleX(0.94);">43 650 kr</span><svg class="i" style="left:908.7px;top:13px" width="13" height="13" viewBox="0 0 24 24" fill="#f5a10c"><path d="M19.48 12.35c-1.57-4.08-7.16-4.3-5.81-10.23.1-.44-.37-.78-.75-.55C9.29 3.71 6.68 8 8.87 13.62c.18.46-.36.89-.75.59-1.81-1.37-2-3.34-1.840-4.750.06-.52-.62-.77-.91-.34C4.69 10.160 4 11.840 4 14.370c.38 5.600 5.110 7.320 6.810 7.540 2.430.310 5.060-.140 6.950-1.870 2.080-1.930 2.840-5.010 1.720-7.690zm-9.280 5.030c1.440-.350 2.180-1.390 2.380-2.310.33-1.430-.96-2.830-.09-5.090.33 1.870 3.270 3.040 3.270 5.080.08 2.530-2.660 4.700-5.560 2.320z"/></svg><svg class="i" style="left:931.7px;top:13px" width="13" height="13" viewBox="0 0 24 24" fill="#f5a10c"><path d="M19.48 12.35c-1.57-4.08-7.16-4.3-5.81-10.23.1-.44-.37-.78-.75-.55C9.29 3.71 6.68 8 8.87 13.62c.18.46-.36.89-.75.59-1.81-1.37-2-3.34-1.840-4.750.06-.52-.62-.77-.91-.34C4.69 10.160 4 11.840 4 14.370c.38 5.600 5.110 7.320 6.810 7.540 2.430.310 5.060-.140 6.950-1.870 2.080-1.930 2.840-5.010 1.720-7.690zm-9.280 5.030c1.440-.350 2.180-1.390 2.380-2.310.33-1.430-.96-2.830-.09-5.090.33 1.870 3.270 3.040 3.270 5.080.08 2.530-2.660 4.700-5.560 2.320z"/></svg><svg class="i" style="left:954.7px;top:13px" width="13" height="13" viewBox="0 0 24 24" fill="#f5a10c"><path d="M19.48 12.35c-1.57-4.08-7.16-4.3-5.81-10.23.1-.44-.37-.78-.75-.55C9.29 3.71 6.68 8 8.87 13.62c.18.46-.36.89-.75.59-1.81-1.37-2-3.34-1.840-4.750.06-.52-.62-.77-.91-.34C4.69 10.160 4 11.840 4 14.370c.38 5.600 5.110 7.320 6.810 7.540 2.430.310 5.060-.140 6.950-1.870 2.080-1.930 2.840-5.010 1.720-7.690zm-9.280 5.030c1.440-.350 2.180-1.390 2.380-2.310.33-1.430-.96-2.830-.09-5.090.33 1.870 3.270 3.040 3.270 5.080.08 2.530-2.660 4.700-5.560 2.320z"/></svg><div class="clip" style="left:992px;width:313.4px;height:38px"><span class="t" style="left:5.2px;top:13px;transform:scaleX(0.9755);">2022-04-11 - 1001 - Installation av AC till kontor</span></div><span class="t" style="left:1313.25px;top:12px;transform:scaleX(0.94);">-</span></div>
<div class="r" style="top:512px;height:39px"><svg class="i" style="left:13px;top:12px" width="15" height="15" viewBox="0 0 24 24" fill="#d4642c"><path d="M10 20v-6h4v6h5v-8h3L12 3 2 12h3v8z"/></svg><span class="t" style="left:30.6px;top:13px;transform:scaleX(0.9198);">BRF Komplett</span><span class="t" style="left:187.08px;top:13px;transform:scaleX(0.9332);">13265</span><svg class="i" style="left:313.8px;top:11.6px" width="16.4" height="16.4" viewBox="0 0 24 24" fill="#555"><path d="M12 2C6.48 2 2 6.48 2 12s4.48 10 10 10 10-4.48 10-10S17.52 2 12 2zm0 3c1.66 0 3 1.34 3 3s-1.34 3-3 3-3-1.34-3-3 1.34-3 3-3zm0 14.2c-2.5 0-4.71-1.28-6-3.22.03-1.99 4-3.08 6-3.08 1.99 0 5.97 1.09 6 3.08-1.29 1.94-3.5 3.22-6 3.22z"/></svg><span class="t" style="left:332.4px;top:13px;transform:scaleX(0.8034);">EA</span><svg class="i" style="left:378px;top:12px" width="15" height="15" viewBox="0 0 24 24" fill="#3fae4f"><path d="M19 3H5c-1.1 0-2 .9-2 2v14c0 1.1.9 2 2 2h14c1.1 0 2-.9 2-2V5c0-1.1-.9-2-2-2zm-5.97 4.06L14.09 6l1.41 1.41L16.91 6l1.06 1.06-1.41 1.41 1.41 1.41-1.06 1.06-1.41-1.4-1.41 1.41-1.06-1.06 1.41-1.41-1.41-1.42zm-6.78.66h5v1.5h-5v-1.5zM11.5 16h-2v2H8v-2H6v-1.5h2v-2h1.5v2h2V16zm6.5 1.25h-5v-1.5h5v1.5zm0-2.5h-5v-1.5h5v1.5z"/></svg><span class="t" style="left:395.74px;top:13px;transform:scaleX(0.9452);">Utbyte av Kylmaskin</span><span class="t" style="left:692.0px;top:13px;transform:scaleX(0.94);">Godkänd</span><span class="t" style="left:842.2px;top:13px;transform:scaleX(0.94);">76 870 kr</span><svg class="i" style="left:908.7px;top:13px" width="13" height="13" viewBox="0 0 24 24" fill="#f5a10c"><path d="M19.48 12.35c-1.57-4.08-7.16-4.3-5.81-10.23.1-.44-.37-.78-.75-.55C9.29 3.71 6.68 8 8.87 13.62c.18.46-.36.89-.75.59-1.81-1.37-2-3.34-1.840-4.750.06-.52-.62-.77-.91-.34C4.69 10.160 4 11.840 4 14.370c.38 5.600 5.110 7.320 6.810 7.540 2.430.310 5.060-.140 6.950-1.870 2.080-1.930 2.840-5.010 1.720-7.690zm-9.280 5.030c1.440-.350 2.180-1.390 2.380-2.310.33-1.430-.96-2.830-.09-5.090.33 1.870 3.270 3.040 3.270 5.080.08 2.530-2.660 4.700-5.560 2.320z"/></svg><svg class="i" style="left:931.7px;top:13px" width="13" height="13" viewBox="0 0 24 24" fill="#cbcbcb"><path d="M19.48 12.35c-1.57-4.08-7.16-4.3-5.81-10.23.1-.44-.37-.78-.75-.55C9.29 3.71 6.68 8 8.87 13.62c.18.46-.36.89-.75.59-1.81-1.37-2-3.34-1.840-4.750.06-.52-.62-.77-.91-.34C4.69 10.160 4 11.840 4 14.370c.38 5.600 5.110 7.320 6.810 7.540 2.430.310 5.060-.140 6.950-1.870 2.080-1.930 2.840-5.010 1.720-7.690zm-9.280 5.030c1.440-.350 2.180-1.390 2.380-2.310.33-1.430-.96-2.830-.09-5.090.33 1.870 3.270 3.040 3.270 5.080.08 2.530-2.660 4.700-5.560 2.320z"/></svg><svg class="i" style="left:954.7px;top:13px" width="13" height="13" viewBox="0 0 24 24" fill="#cbcbcb"><path d="M19.48 12.35c-1.57-4.08-7.16-4.3-5.81-10.23.1-.44-.37-.78-.75-.55C9.29 3.71 6.68 8 8.87 13.62c.18.46-.36.89-.75.59-1.81-1.37-2-3.34-1.840-4.750.06-.52-.62-.77-.91-.34C4.69 10.160 4 11.840 4 14.370c.38 5.600 5.110 7.320 6.810 7.540 2.430.310 5.060-.140 6.950-1.870 2.080-1.930 2.840-5.010 1.720-7.690zm-9.280 5.030c1.440-.350 2.180-1.390 2.380-2.310.33-1.430-.96-2.830-.09-5.090.33 1.870 3.270 3.040 3.270 5.080.08 2.530-2.660 4.700-5.560 2.320z"/></svg><div class="clip" style="left:992px;width:313.4px;height:38px"><span class="t" style="left:5.5px;top:12px;transform:scaleX(0.94);">-</span></div><span class="t" style="left:1313.25px;top:12px;transform:scaleX(0.94);">-</span></div>
<div class="r" style="top:551px;height:38px"><svg class="i" style="left:13px;top:12px" width="15" height="15" viewBox="0 0 24 24" fill="#d4642c"><path d="M10 20v-6h4v6h5v-8h3L12 3 2 12h3v8z"/></svg><span class="t" style="left:30.9px;top:12px;transform:scaleX(0.94);">Förskolan Grunden</span><span class="t" style="left:187.08px;top:12px;transform:scaleX(0.9211);">13334</span><svg class="i" style="left:313.8px;top:11.6px" width="16.4" height="16.4" viewBox="0 0 24 24" fill="#555"><path d="M12 2C6.48 2 2 6.48 2 12s4.48 10 10 10 10-4.48 10-10S17.52 2 12 2zm0 3c1.66 0 3 1.34 3 3s-1.34 3-3 3-3-1.34-3-3 1.34-3 3-3zm0 14.2c-2.5 0-4.71-1.28-6-3.22.03-1.99 4-3.08 6-3.08 1.99 0 5.97 1.09 6 3.08-1.29 1.94-3.5 3.22-6 3.22z"/></svg><span class="t" style="left:332.4px;top:12px;transform:scaleX(0.8034);">EA</span><svg class="i" style="left:378px;top:12px" width="15" height="15" viewBox="0 0 24 24" fill="#a9c3f3"><path d="M19 3H5c-1.1 0-2 .9-2 2v14c0 1.1.9 2 2 2h14c1.1 0 2-.9 2-2V5c0-1.1-.9-2-2-2zm-5.97 4.06L14.09 6l1.41 1.41L16.91 6l1.06 1.06-1.41 1.41 1.41 1.41-1.06 1.06-1.41-1.4-1.41 1.41-1.06-1.06 1.41-1.41-1.41-1.42zm-6.78.66h5v1.5h-5v-1.5zM11.5 16h-2v2H8v-2H6v-1.5h2v-2h1.5v2h2V16zm6.5 1.25h-5v-1.5h5v1.5zm0-2.5h-5v-1.5h5v1.5z"/></svg><span class="t" style="left:395.74px;top:12px;transform:scaleX(0.9793);">Installation av larm och dörrstopp</span><span class="t" style="left:692.0px;top:12px;transform:scaleX(0.94);">Kostnadsförslag</span><span class="t" style="left:842.2px;top:12px;transform:scaleX(0.94);">70 180 kr</span><svg class="i" style="left:908.7px;top:13px" width="13" height="13" viewBox="0 0 24 24" fill="#f5a10c"><path d="M19.48 12.35c-1.57-4.08-7.16-4.3-5.81-10.23.1-.44-.37-.78-.75-.55C9.29 3.71 6.68 8 8.87 13.62c.18.46-.36.89-.75.59-1.81-1.37-2-3.34-1.840-4.750.06-.52-.62-.77-.91-.34C4.69 10.160 4 11.840 4 14.370c.38 5.600 5.110 7.320 6.810 7.540 2.430.310 5.060-.140 6.950-1.870 2.080-1.930 2.840-5.010 1.720-7.690zm-9.280 5.030c1.440-.350 2.180-1.390 2.380-2.310.33-1.430-.96-2.830-.09-5.090.33 1.870 3.270 3.040 3.270 5.080.08 2.530-2.660 4.700-5.560 2.320z"/></svg><svg class="i" style="left:931.7px;top:13px" width="13" height="13" viewBox="0 0 24 24" fill="#f5a10c"><path d="M19.48 12.35c-1.57-4.08-7.16-4.3-5.81-10.23.1-.44-.37-.78-.75-.55C9.29 3.71 6.68 8 8.87 13.62c.18.46-.36.89-.75.59-1.81-1.37-2-3.34-1.840-4.750.06-.52-.62-.77-.91-.34C4.69 10.160 4 11.840 4 14.370c.38 5.600 5.110 7.320 6.810 7.540 2.430.310 5.060-.140 6.950-1.870 2.080-1.930 2.840-5.010 1.720-7.690zm-9.280 5.030c1.440-.350 2.180-1.390 2.380-2.310.33-1.430-.96-2.830-.09-5.090.33 1.870 3.270 3.040 3.270 5.080.08 2.530-2.660 4.700-5.560 2.320z"/></svg><svg class="i" style="left:954.7px;top:13px" width="13" height="13" viewBox="0 0 24 24" fill="#f5a10c"><path d="M19.48 12.35c-1.57-4.08-7.16-4.3-5.81-10.23.1-.44-.37-.78-.75-.55C9.29 3.71 6.68 8 8.87 13.62c.18.46-.36.89-.75.59-1.81-1.37-2-3.34-1.840-4.750.06-.52-.62-.77-.91-.34C4.69 10.160 4 11.840 4 14.370c.38 5.600 5.110 7.320 6.810 7.540 2.430.310 5.060-.140 6.950-1.870 2.080-1.930 2.840-5.010 1.720-7.690zm-9.280 5.030c1.440-.350 2.180-1.390 2.380-2.310.33-1.430-.96-2.830-.09-5.090.33 1.870 3.270 3.040 3.270 5.080.08 2.530-2.660 4.700-5.560 2.320z"/></svg><div class="clip" style="left:992px;width:313.4px;height:37px"><span class="t" style="left:5.5px;top:11px;transform:scaleX(0.94);">-</span></div><span class="t" style="left:1313.25px;top:11px;transform:scaleX(0.94);">-</span></div>
<div class="r" style="top:589px;height:39px"><svg class="i" style="left:13px;top:12px" width="15" height="15" viewBox="0 0 24 24" fill="#d4642c"><path d="M10 20v-6h4v6h5v-8h3L12 3 2 12h3v8z"/></svg><span class="t" style="left:30.78px;top:13px;transform:scaleX(0.9257);">Solskensaffären</span><span class="t" style="left:187.08px;top:13px;transform:scaleX(0.929);">13533</span><svg class="i" style="left:313.8px;top:11.6px" width="16.4" height="16.4" viewBox="0 0 24 24" fill="#555"><path d="M12 2C6.48 2 2 6.48 2 12s4.48 10 10 10 10-4.48 10-10S17.52 2 12 2zm0 3c1.66 0 3 1.34 3 3s-1.34 3-3 3-3-1.34-3-3 1.34-3 3-3zm0 14.2c-2.5 0-4.71-1.28-6-3.22.03-1.99 4-3.08 6-3.08 1.99 0 5.97 1.09 6 3.08-1.29 1.94-3.5 3.22-6 3.22z"/></svg><span class="t" style="left:332.4px;top:13px;transform:scaleX(0.8034);">EA</span><svg class="i" style="left:378px;top:12px" width="15" height="15" viewBox="0 0 24 24" fill="#ee4a3c"><path d="M19 3H5c-1.1 0-2 .9-2 2v14c0 1.1.9 2 2 2h14c1.1 0 2-.9 2-2V5c0-1.1-.9-2-2-2zm-5.97 4.06L14.09 6l1.41 1.41L16.91 6l1.06 1.06-1.41 1.41 1.41 1.41-1.06 1.06-1.41-1.4-1.41 1.41-1.06-1.06 1.41-1.41-1.41-1.42zm-6.78.66h5v1.5h-5v-1.5zM11.5 16h-2v2H8v-2H6v-1.5h2v-2h1.5v2h2V16zm6.5 1.25h-5v-1.5h5v1.5zm0-2.5h-5v-1.5h5v1.5z"/></svg><span class="t" style="left:395.74px;top:13px;transform:scaleX(0.9651);">Installation av larm</span><span class="t" style="left:692.0px;top:13px;transform:scaleX(0.94);">Avslagen</span><span class="t" style="left:842.2px;top:13px;transform:scaleX(0.94);">36 840 kr</span><svg class="i" style="left:908.7px;top:13px" width="13" height="13" viewBox="0 0 24 24" fill="#f5a10c"><path d="M19.48 12.35c-1.57-4.08-7.16-4.3-5.81-10.23.1-.44-.37-.78-.75-.55C9.29 3.71 6.68 8 8.87 13.62c.18.46-.36.89-.75.59-1.81-1.37-2-3.34-1.840-4.750.06-.52-.62-.77-.91-.34C4.69 10.160 4 11.840 4 14.370c.38 5.600 5.110 7.320 6.810 7.540 2.430.310 5.060-.140 6.950-1.870 2.080-1.930 2.840-5.010 1.720-7.690zm-9.280 5.030c1.440-.350 2.180-1.390 2.380-2.310.33-1.430-.96-2.830-.09-5.090.33 1.870 3.270 3.040 3.270 5.080.08 2.530-2.660 4.700-5.560 2.320z"/></svg><svg class="i" style="left:931.7px;top:13px" width="13" height="13" viewBox="0 0 24 24" fill="#f5a10c"><path d="M19.48 12.35c-1.57-4.08-7.16-4.3-5.81-10.23.1-.44-.37-.78-.75-.55C9.29 3.71 6.68 8 8.87 13.62c.18.46-.36.89-.75.59-1.81-1.37-2-3.34-1.840-4.750.06-.52-.62-.77-.91-.34C4.69 10.160 4 11.840 4 14.370c.38 5.600 5.110 7.320 6.810 7.540 2.430.310 5.060-.140 6.950-1.870 2.080-1.930 2.840-5.010 1.720-7.690zm-9.280 5.030c1.440-.350 2.180-1.390 2.380-2.310.33-1.430-.96-2.830-.09-5.090.33 1.870 3.270 3.040 3.270 5.080.08 2.530-2.660 4.700-5.560 2.320z"/></svg><svg class="i" style="left:954.7px;top:13px" width="13" height="13" viewBox="0 0 24 24" fill="#cbcbcb"><path d="M19.48 12.35c-1.57-4.08-7.16-4.3-5.81-10.23.1-.44-.37-.78-.75-.55C9.29 3.71 6.68 8 8.87 13.62c.18.46-.36.89-.75.59-1.81-1.37-2-3.34-1.840-4.750.06-.52-.62-.77-.91-.34C4.69 10.160 4 11.840 4 14.370c.38 5.600 5.110 7.320 6.810 7.540 2.430.310 5.060-.140 6.950-1.870 2.080-1.930 2.840-5.010 1.720-7.690zm-9.280 5.030c1.440-.350 2.180-1.390 2.380-2.310.33-1.430-.96-2.830-.09-5.090.33 1.870 3.270 3.040 3.270 5.080.08 2.530-2.660 4.700-5.560 2.320z"/></svg><div class="clip" style="left:992px;width:313.4px;height:38px"><span class="t" style="left:5.5px;top:12px;transform:scaleX(0.94);">-</span></div><span class="t" style="left:1313.25px;top:12px;transform:scaleX(0.94);">-</span></div>
<div class="r" style="top:628px;height:39px"><span class="t" style="left:11.38px;top:12px;transform:scaleX(0.94);">-</span><span class="t" style="left:187.08px;top:12px;transform:scaleX(0.94);">-</span><svg class="i" style="left:313.8px;top:11.6px" width="16.4" height="16.4" viewBox="0 0 24 24" fill="#555"><path d="M12 2C6.48 2 2 6.48 2 12s4.48 10 10 10 10-4.48 10-10S17.52 2 12 2zm0 3c1.66 0 3 1.34 3 3s-1.34 3-3 3-3-1.34-3-3 1.34-3 3-3zm0 14.2c-2.5 0-4.71-1.28-6-3.22.03-1.99 4-3.08 6-3.08 1.99 0 5.97 1.09 6 3.08-1.29 1.94-3.5 3.22-6 3.22z"/></svg><span class="t" style="left:332.24px;top:13px;transform:scaleX(0.9707);">MD</span><svg class="i" style="left:378px;top:12px" width="15" height="15" viewBox="0 0 24 24" fill="#a9c3f3"><path d="M19 3H5c-1.1 0-2 .9-2 2v14c0 1.1.9 2 2 2h14c1.1 0 2-.9 2-2V5c0-1.1-.9-2-2-2zm-5.97 4.06L14.09 6l1.41 1.41L16.91 6l1.06 1.06-1.41 1.41 1.41 1.41-1.06 1.06-1.41-1.4-1.41 1.41-1.06-1.06 1.41-1.41-1.41-1.42zm-6.78.66h5v1.5h-5v-1.5zM11.5 16h-2v2H8v-2H6v-1.5h2v-2h1.5v2h2V16zm6.5 1.25h-5v-1.5h5v1.5zm0-2.5h-5v-1.5h5v1.5z"/></svg><span class="t" style="left:395.8px;top:13px;transform:scaleX(0.9354);">Mikael Test</span><span class="t" style="left:692.0px;top:13px;transform:scaleX(0.94);">Förfrågan</span><span class="t" style="left:889.06px;top:12px;transform:scaleX(0.94);">-</span><svg class="i" style="left:908.7px;top:13px" width="13" height="13" viewBox="0 0 24 24" fill="#cbcbcb"><path d="M19.48 12.35c-1.57-4.08-7.16-4.3-5.81-10.23.1-.44-.37-.78-.75-.55C9.29 3.71 6.68 8 8.87 13.62c.18.46-.36.89-.75.59-1.81-1.37-2-3.34-1.840-4.750.06-.52-.62-.77-.91-.34C4.69 10.160 4 11.840 4 14.370c.38 5.600 5.110 7.320 6.810 7.540 2.430.310 5.060-.140 6.950-1.870 2.080-1.930 2.840-5.010 1.720-7.690zm-9.280 5.030c1.440-.350 2.180-1.390 2.380-2.310.33-1.430-.96-2.830-.09-5.090.33 1.870 3.270 3.040 3.270 5.080.08 2.530-2.660 4.700-5.560 2.320z"/></svg><svg class="i" style="left:931.7px;top:13px" width="13" height="13" viewBox="0 0 24 24" fill="#cbcbcb"><path d="M19.48 12.35c-1.57-4.08-7.16-4.3-5.81-10.23.1-.44-.37-.78-.75-.55C9.29 3.71 6.68 8 8.87 13.62c.18.46-.36.89-.75.59-1.81-1.37-2-3.34-1.840-4.750.06-.52-.62-.77-.91-.34C4.69 10.160 4 11.840 4 14.370c.38 5.600 5.110 7.320 6.810 7.540 2.430.310 5.060-.140 6.950-1.870 2.080-1.930 2.840-5.010 1.720-7.690zm-9.280 5.030c1.440-.350 2.180-1.390 2.380-2.310.33-1.430-.96-2.830-.09-5.090.33 1.870 3.270 3.040 3.270 5.080.08 2.530-2.660 4.700-5.560 2.320z"/></svg><svg class="i" style="left:954.7px;top:13px" width="13" height="13" viewBox="0 0 24 24" fill="#cbcbcb"><path d="M19.48 12.35c-1.57-4.08-7.16-4.3-5.81-10.23.1-.44-.37-.78-.75-.55C9.29 3.71 6.68 8 8.87 13.62c.18.46-.36.89-.75.59-1.81-1.37-2-3.34-1.840-4.750.06-.52-.62-.77-.91-.34C4.69 10.160 4 11.840 4 14.370c.38 5.600 5.110 7.320 6.810 7.540 2.430.310 5.060-.140 6.950-1.870 2.080-1.930 2.840-5.010 1.720-7.690zm-9.280 5.030c1.440-.350 2.180-1.390 2.380-2.310.33-1.430-.96-2.830-.09-5.090.33 1.870 3.270 3.040 3.270 5.080.08 2.530-2.660 4.700-5.560 2.320z"/></svg><div class="clip" style="left:992px;width:313.4px;height:38px"><span class="t" style="left:5.5px;top:12px;transform:scaleX(0.94);">-</span></div><svg class="i" style="left:1314.1px;top:11.3px" width="16.7" height="16.7" viewBox="0 0 24 24" fill="#555"><path d="M5.500 2.500h8.200L19 7.800v5.400h-2V9h-4.500V4.500H6.500v15H11v2H5.500c-.600 0-1-.400-1-1v-17c0-.600.400-1 1-1z"/><path d="M22.900 18.700l-1.200-.900c0-.300 0-.500 0-.800l1.200-.900-1.200-2.100-1.400.600c-.200-.200-.500-.300-.700-.400l-.200-1.500h-2.400l-.200 1.500c-.300.100-.500.200-.700.400l-1.400-.600-1.200 2.100 1.200.900c0 .300 0 .500 0 .800l-1.200.900 1.200 2.100 1.400-.600c.200.200.500.300.700.400l.200 1.500h2.400l.200-1.500c.300-.100.500-.200.700-.400l1.400.600zM18.200 19c-.900 0-1.600-.700-1.600-1.600s.700-1.600 1.600-1.600 1.600.700 1.600 1.600-.700 1.600-1.600 1.600z"/></svg><span class="t" style="left:1332.6px;top:13px;transform:scaleX(0.9535);">NO - Kalkyl fr excel</span></div>
<div class="r" style="top:667px;height:39px"><svg class="i" style="left:13px;top:12px" width="15" height="15" viewBox="0 0 24 24" fill="#d4642c"><path d="M10 20v-6h4v6h5v-8h3L12 3 2 12h3v8z"/></svg><span class="t" style="left:30.78px;top:13px;transform:scaleX(0.9238);">Anne Persson</span><span class="t" style="left:187.08px;top:13px;transform:scaleX(0.9112);">1008</span><svg class="i" style="left:313.8px;top:11.6px" width="16.4" height="16.4" viewBox="0 0 24 24" fill="#555"><path d="M12 2C6.48 2 2 6.48 2 12s4.48 10 10 10 10-4.48 10-10S17.52 2 12 2zm0 3c1.66 0 3 1.34 3 3s-1.34 3-3 3-3-1.34-3-3 1.34-3 3-3zm0 14.2c-2.5 0-4.71-1.28-6-3.22.03-1.99 4-3.08 6-3.08 1.99 0 5.97 1.09 6 3.08-1.29 1.94-3.5 3.22-6 3.22z"/></svg><span class="t" style="left:332.4px;top:13px;transform:scaleX(0.8034);">EA</span><svg class="i" style="left:378px;top:12px" width="15" height="15" viewBox="0 0 24 24" fill="#3fae4f"><path d="M19 3H5c-1.1 0-2 .9-2 2v14c0 1.1.9 2 2 2h14c1.1 0 2-.9 2-2V5c0-1.1-.9-2-2-2zm-5.97 4.06L14.09 6l1.41 1.41L16.91 6l1.06 1.06-1.41 1.41 1.41 1.41-1.06 1.06-1.41-1.4-1.41 1.41-1.06-1.06 1.41-1.41-1.41-1.42zm-6.78.66h5v1.5h-5v-1.5zM11.5 16h-2v2H8v-2H6v-1.5h2v-2h1.5v2h2V16zm6.5 1.25h-5v-1.5h5v1.5zm0-2.5h-5v-1.5h5v1.5z"/></svg><span class="t" style="left:395.74px;top:13px;transform:scaleX(0.9568);">Utbyte av trasiga solpaneler</span><span class="t" style="left:692.0px;top:13px;transform:scaleX(0.94);">Godkänd</span><span class="t" style="left:842.2px;top:13px;transform:scaleX(0.94);">75 000 kr</span><svg class="i" style="left:908.7px;top:13px" width="13" height="13" viewBox="0 0 24 24" fill="#f5a10c"><path d="M19.48 12.35c-1.57-4.08-7.16-4.3-5.81-10.23.1-.44-.37-.78-.75-.55C9.29 3.71 6.68 8 8.87 13.62c.18.46-.36.89-.75.59-1.81-1.37-2-3.34-1.840-4.750.06-.52-.62-.77-.91-.34C4.69 10.160 4 11.840 4 14.370c.38 5.600 5.110 7.320 6.810 7.540 2.430.310 5.060-.140 6.950-1.870 2.080-1.930 2.840-5.010 1.720-7.690zm-9.280 5.030c1.440-.350 2.180-1.390 2.380-2.310.33-1.430-.96-2.830-.09-5.090.33 1.870 3.270 3.040 3.270 5.080.08 2.530-2.660 4.700-5.560 2.320z"/></svg><svg class="i" style="left:931.7px;top:13px" width="13" height="13" viewBox="0 0 24 24" fill="#f5a10c"><path d="M19.48 12.35c-1.57-4.08-7.16-4.3-5.81-10.23.1-.44-.37-.78-.75-.55C9.29 3.71 6.68 8 8.87 13.62c.18.46-.36.89-.75.59-1.81-1.37-2-3.34-1.840-4.750.06-.52-.62-.77-.91-.34C4.69 10.160 4 11.840 4 14.370c.38 5.600 5.110 7.320 6.810 7.540 2.430.310 5.060-.140 6.950-1.870 2.080-1.930 2.840-5.010 1.720-7.690zm-9.280 5.030c1.440-.350 2.180-1.390 2.380-2.310.33-1.430-.96-2.830-.09-5.090.33 1.870 3.270 3.040 3.270 5.080.08 2.530-2.660 4.700-5.560 2.320z"/></svg><svg class="i" style="left:954.7px;top:13px" width="13" height="13" viewBox="0 0 24 24" fill="#f5a10c"><path d="M19.48 12.35c-1.57-4.08-7.16-4.3-5.81-10.23.1-.44-.37-.78-.75-.55C9.29 3.71 6.68 8 8.87 13.62c.18.46-.36.89-.75.59-1.81-1.37-2-3.34-1.840-4.750.06-.52-.62-.77-.91-.34C4.69 10.160 4 11.840 4 14.370c.38 5.600 5.110 7.320 6.810 7.540 2.430.310 5.060-.140 6.950-1.870 2.080-1.930 2.840-5.010 1.720-7.690zm-9.280 5.030c1.440-.350 2.180-1.390 2.380-2.310.33-1.430-.96-2.830-.09-5.090.33 1.870 3.270 3.040 3.270 5.080.08 2.530-2.660 4.700-5.560 2.320z"/></svg><div class="clip" style="left:992px;width:313.4px;height:38px"><span class="t" style="left:5.2px;top:13px;transform:scaleX(0.9662);">2022-11-25 - 1010 - Utbyte av trasiga solpaneler</span></div><svg class="i" style="left:1314.1px;top:11.3px" width="16.7" height="16.7" viewBox="0 0 24 24" fill="#555"><path d="M5.500 2.500h8.200L19 7.800v5.400h-2V9h-4.500V4.500H6.500v15H11v2H5.500c-.600 0-1-.400-1-1v-17c0-.600.400-1 1-1z"/><path d="M22.900 18.700l-1.200-.900c0-.300 0-.500 0-.800l1.200-.900-1.200-2.100-1.400.600c-.200-.200-.500-.300-.700-.400l-.200-1.500h-2.400l-.200 1.500c-.300.100-.500.200-.700.400l-1.400-.600-1.200 2.100 1.200.900c0 .300 0 .500 0 .800l-1.200.900 1.200 2.100 1.400-.600c.200.200.500.300.700.400l.200 1.500h2.400l.200-1.500c.300-.100.500-.200.700-.400l1.400.600zM18.200 19c-.900 0-1.600-.700-1.600-1.600s.700-1.600 1.600-1.600 1.600.700 1.600 1.600-.700 1.600-1.600 1.600z"/></svg><span class="t" style="left:1332.6px;top:13px;transform:scaleX(0.9556);">Utbyte av solceller</span></div>
<div class="r" style="top:706px;height:39px"><svg class="i" style="left:13px;top:12px" width="15" height="15" viewBox="0 0 24 24" fill="#d4642c"><path d="M10 20v-6h4v6h5v-8h3L12 3 2 12h3v8z"/></svg><span class="t" style="left:30.6px;top:13px;transform:scaleX(0.9235);">VentKarlssons</span><span class="t" style="left:187.08px;top:13px;transform:scaleX(0.9208);">1011</span><svg class="i" style="left:313.8px;top:11.6px" width="16.4" height="16.4" viewBox="0 0 24 24" fill="#555"><path d="M12 2C6.48 2 2 6.48 2 12s4.48 10 10 10 10-4.48 10-10S17.52 2 12 2zm0 3c1.66 0 3 1.34 3 3s-1.34 3-3 3-3-1.34-3-3 1.34-3 3-3zm0 14.2c-2.5 0-4.71-1.28-6-3.22.03-1.99 4-3.08 6-3.08 1.99 0 5.97 1.09 6 3.08-1.29 1.94-3.5 3.22-6 3.22z"/></svg><span class="t" style="left:332.4px;top:13px;transform:scaleX(0.8034);">EA</span><svg class="i" style="left:378px;top:12px" width="15" height="15" viewBox="0 0 24 24" fill="#3fae4f"><path d="M19 3H5c-1.1 0-2 .9-2 2v14c0 1.1.9 2 2 2h14c1.1 0 2-.9 2-2V5c0-1.1-.9-2-2-2zm-5.97 4.06L14.09 6l1.41 1.41L16.91 6l1.06 1.06-1.41 1.41 1.41 1.41-1.06 1.06-1.41-1.4-1.41 1.41-1.06-1.06 1.41-1.41-1.41-1.42zm-6.78.66h5v1.5h-5v-1.5zM11.5 16h-2v2H8v-2H6v-1.5h2v-2h1.5v2h2V16zm6.5 1.25h-5v-1.5h5v1.5zm0-2.5h-5v-1.5h5v1.5z"/></svg><span class="t" style="left:395.74px;top:13px;transform:scaleX(0.9655);">Utbyte av fläkt</span><span class="t" style="left:692.0px;top:13px;transform:scaleX(0.94);">Godkänd</span><span class="t" style="left:842.36px;top:13px;transform:scaleX(0.9446);">15 000 kr</span><svg class="i" style="left:908.7px;top:13px" width="13" height="13" viewBox="0 0 24 24" fill="#cbcbcb"><path d="M19.48 12.35c-1.57-4.08-7.16-4.3-5.81-10.23.1-.44-.37-.78-.75-.55C9.29 3.71 6.68 8 8.87 13.62c.18.46-.36.89-.75.59-1.81-1.37-2-3.34-1.840-4.750.06-.52-.62-.77-.91-.34C4.69 10.160 4 11.840 4 14.370c.38 5.600 5.110 7.320 6.810 7.540 2.430.310 5.060-.140 6.950-1.870 2.080-1.930 2.840-5.010 1.720-7.690zm-9.280 5.030c1.440-.350 2.180-1.390 2.380-2.310.33-1.430-.96-2.830-.09-5.090.33 1.870 3.270 3.040 3.270 5.080.08 2.530-2.660 4.700-5.560 2.320z"/></svg><svg class="i" style="left:931.7px;top:13px" width="13" height="13" viewBox="0 0 24 24" fill="#cbcbcb"><path d="M19.48 12.35c-1.57-4.08-7.16-4.3-5.81-10.23.1-.44-.37-.78-.75-.55C9.29 3.71 6.68 8 8.87 13.62c.18.46-.36.89-.75.59-1.81-1.37-2-3.34-1.840-4.750.06-.52-.62-.77-.91-.34C4.69 10.160 4 11.840 4 14.370c.38 5.600 5.110 7.320 6.810 7.540 2.430.310 5.060-.140 6.950-1.870 2.080-1.930 2.840-5.010 1.720-7.690zm-9.280 5.030c1.440-.350 2.180-1.390 2.380-2.310.33-1.430-.96-2.830-.09-5.090.33 1.870 3.270 3.040 3.270 5.080.08 2.530-2.660 4.700-5.560 2.320z"/></svg><svg class="i" style="left:954.7px;top:13px" width="13" height="13" viewBox="0 0 24 24" fill="#cbcbcb"><path d="M19.48 12.35c-1.57-4.08-7.16-4.3-5.81-10.23.1-.44-.37-.78-.75-.55C9.29 3.71 6.68 8 8.87 13.62c.18.46-.36.89-.75.59-1.81-1.37-2-3.34-1.840-4.750.06-.52-.62-.77-.91-.34C4.69 10.160 4 11.840 4 14.370c.38 5.600 5.110 7.320 6.810 7.540 2.430.310 5.060-.140 6.950-1.870 2.080-1.930 2.840-5.010 1.720-7.690zm-9.280 5.030c1.440-.350 2.180-1.390 2.380-2.310.33-1.430-.96-2.830-.09-5.090.33 1.870 3.270 3.040 3.270 5.080.08 2.530-2.660 4.700-5.560 2.320z"/></svg><div class="clip" style="left:992px;width:313.4px;height:38px"><span class="t" style="left:5.5px;top:12px;transform:scaleX(0.94);">-</span></div><svg class="i" style="left:1314.1px;top:11.3px" width="16.7" height="16.7" viewBox="0 0 24 24" fill="#555"><path d="M5.500 2.500h8.200L19 7.800v5.400h-2V9h-4.500V4.500H6.500v15H11v2H5.500c-.600 0-1-.400-1-1v-17c0-.600.400-1 1-1z"/><path d="M22.900 18.700l-1.200-.900c0-.300 0-.500 0-.800l1.200-.900-1.200-2.100-1.400.600c-.200-.200-.500-.300-.700-.400l-.200-1.500h-2.400l-.200 1.500c-.300.100-.500.200-.700.400l-1.400-.600-1.200 2.100 1.200.900c0 .300 0 .500 0 .800l-1.200.900 1.200 2.100 1.400-.600c.200.200.500.300.700.400l.200 1.500h2.400l.200-1.500c.300-.100.500-.200.700-.400l1.400.600zM18.200 19c-.900 0-1.600-.700-1.600-1.600s.700-1.600 1.600-1.600 1.600.700 1.600 1.600-.700 1.600-1.600 1.600z"/></svg><span class="t" style="left:1332.6px;top:13px;transform:scaleX(0.9845);">Utbyte</span></div>
<div class="r" style="top:745px;height:38px"><svg class="i" style="left:13px;top:12px" width="15" height="15" viewBox="0 0 24 24" fill="#d4642c"><path d="M10 20v-6h4v6h5v-8h3L12 3 2 12h3v8z"/></svg><span class="t" style="left:30.72px;top:12px;transform:scaleX(0.9492);">Arne Nils Andersen</span><span class="t" style="left:186.88px;top:12px;transform:scaleX(0.932);">7089</span><svg class="i" style="left:313.8px;top:11.6px" width="16.4" height="16.4" viewBox="0 0 24 24" fill="#555"><path d="M12 2C6.48 2 2 6.48 2 12s4.48 10 10 10 10-4.48 10-10S17.52 2 12 2zm0 3c1.66 0 3 1.34 3 3s-1.34 3-3 3-3-1.34-3-3 1.34-3 3-3zm0 14.2c-2.5 0-4.71-1.28-6-3.22.03-1.99 4-3.08 6-3.08 1.99 0 5.97 1.09 6 3.08-1.29 1.94-3.5 3.22-6 3.22z"/></svg><span class="t" style="left:332.4px;top:12px;transform:scaleX(0.8034);">EA</span><svg class="i" style="left:378px;top:12px" width="15" height="15" viewBox="0 0 24 24" fill="#3fae4f"><path d="M19 3H5c-1.1 0-2 .9-2 2v14c0 1.1.9 2 2 2h14c1.1 0 2-.9 2-2V5c0-1.1-.9-2-2-2zm-5.97 4.06L14.09 6l1.41 1.41L16.91 6l1.06 1.06-1.41 1.41 1.41 1.41-1.06 1.06-1.41-1.4-1.41 1.41-1.06-1.06 1.41-1.41-1.41-1.42zm-6.78.66h5v1.5h-5v-1.5zM11.5 16h-2v2H8v-2H6v-1.5h2v-2h1.5v2h2V16zm6.5 1.25h-5v-1.5h5v1.5zm0-2.5h-5v-1.5h5v1.5z"/></svg><span class="t" style="left:395.74px;top:12px;transform:scaleX(0.9514);">Utbyte av VP - Löpande</span><span class="t" style="left:692.0px;top:12px;transform:scaleX(0.94);">Godkänd</span><span class="t" style="left:889.06px;top:11px;transform:scaleX(0.94);">-</span><svg class="i" style="left:908.7px;top:13px" width="13" height="13" viewBox="0 0 24 24" fill="#f5a10c"><path d="M19.48 12.35c-1.57-4.08-7.16-4.3-5.81-10.23.1-.44-.37-.78-.75-.55C9.29 3.71 6.68 8 8.87 13.62c.18.46-.36.89-.75.59-1.81-1.37-2-3.34-1.840-4.750.06-.52-.62-.77-.91-.34C4.69 10.160 4 11.840 4 14.370c.38 5.600 5.110 7.320 6.810 7.540 2.430.310 5.060-.140 6.950-1.870 2.080-1.930 2.840-5.010 1.720-7.690zm-9.280 5.030c1.440-.350 2.180-1.390 2.380-2.310.33-1.430-.96-2.830-.09-5.090.33 1.870 3.270 3.040 3.270 5.080.08 2.530-2.660 4.700-5.560 2.320z"/></svg><svg class="i" style="left:931.7px;top:13px" width="13" height="13" viewBox="0 0 24 24" fill="#f5a10c"><path d="M19.48 12.35c-1.57-4.08-7.16-4.3-5.81-10.23.1-.44-.37-.78-.75-.55C9.29 3.71 6.68 8 8.87 13.62c.18.46-.36.89-.75.59-1.81-1.37-2-3.34-1.840-4.750.06-.52-.62-.77-.91-.34C4.69 10.160 4 11.840 4 14.370c.38 5.600 5.110 7.320 6.810 7.540 2.430.310 5.060-.140 6.950-1.870 2.080-1.930 2.840-5.010 1.720-7.690zm-9.280 5.030c1.440-.350 2.180-1.390 2.380-2.310.33-1.430-.96-2.830-.09-5.090.33 1.870 3.270 3.040 3.270 5.080.08 2.530-2.660 4.700-5.560 2.320z"/></svg><svg class="i" style="left:954.7px;top:13px" width="13" height="13" viewBox="0 0 24 24" fill="#f5a10c"><path d="M19.48 12.35c-1.57-4.08-7.16-4.3-5.81-10.23.1-.44-.37-.78-.75-.55C9.29 3.71 6.68 8 8.87 13.62c.18.46-.36.89-.75.59-1.81-1.37-2-3.34-1.840-4.750.06-.52-.62-.77-.91-.34C4.69 10.160 4 11.840 4 14.370c.38 5.600 5.110 7.320 6.810 7.540 2.430.310 5.060-.140 6.950-1.870 2.080-1.930 2.840-5.010 1.720-7.690zm-9.280 5.030c1.440-.350 2.180-1.390 2.380-2.310.33-1.430-.96-2.830-.09-5.090.33 1.870 3.270 3.040 3.270 5.080.08 2.530-2.660 4.700-5.560 2.320z"/></svg><div class="clip" style="left:992px;width:313.4px;height:37px"><span class="t" style="left:5.2px;top:12px;transform:scaleX(0.9619);">2023-04-19 - 10150 - Planerad</span></div><svg class="i" style="left:1314.1px;top:11.3px" width="16.7" height="16.7" viewBox="0 0 24 24" fill="#555"><path d="M5.500 2.500h8.200L19 7.800v5.400h-2V9h-4.500V4.500H6.500v15H11v2H5.500c-.600 0-1-.400-1-1v-17c0-.600.400-1 1-1z"/><path d="M22.900 18.700l-1.200-.900c0-.300 0-.500 0-.800l1.200-.900-1.200-2.100-1.400.600c-.200-.200-.500-.300-.700-.400l-.200-1.500h-2.400l-.200 1.500c-.300.100-.500.200-.700.400l-1.400-.600-1.200 2.100 1.200.900c0 .300 0 .500 0 .800l-1.200.900 1.200 2.100 1.400-.600c.200.200.500.300.700.400l.200 1.500h2.400l.200-1.500c.300-.100.500-.200.700-.400l1.400.600zM18.200 19c-.900 0-1.600-.700-1.600-1.600s.700-1.600 1.600-1.600 1.600.700 1.600 1.600-.700 1.600-1.600 1.600z"/></svg><span class="t" style="left:1332.6px;top:12px;transform:scaleX(0.975);">NO - Entr - Nåværende (till projekt) Word</span></div>
</div>
<div id="thead"><span class="t h" style="left:10.81px;top:7.5px;transform:scaleX(0.9971);">Anläggning</span><span class="t h hd" style="left:186.4px;top:7.5px;transform:scaleX(1.0339);">Offertnummer</span><span class="t h" style="left:312.24px;top:7.5px;transform:scaleX(0.9535);">Säljare</span><span class="t h" style="left:375.2px;top:7.5px;transform:scaleX(0.9868);">Benämning</span><span class="t h" style="left:691.2px;top:7.5px;transform:scaleX(0.9583);">Status</span><span class="t h" style="left:825.7px;top:7.5px;transform:scaleX(1.0226);">Offertbelopp</span><span class="t h" style="left:907.76px;top:7.5px;transform:scaleX(0.9786);">Sannolikhet</span><span class="t h" style="left:997.7px;top:7.5px;transform:scaleX(1.0415);">Order / Projekt / Avtal</span><span class="t h" style="left:1312.26px;top:7.5px;transform:scaleX(1.0389);">Offerttyp</span><svg class="i" style="left:266.8px;top:10px" width="12" height="12" viewBox="0 0 24 24" fill="#1a1a1a"><path d="M20 12l-1.41-1.41L13 16.17V4h-2v12.17l-5.58-5.59L4 12l8 8 8-8z"/></svg><svg class="i" style="left:1628px;top:8.299999999999997px" width="16" height="16" viewBox="0 0 24 24" fill="#1a1a1a"><path d="M19.43 12.98c.04-.32.07-.64.07-.98 0-.34-.03-.66-.07-.98l2.11-1.65c.19-.15.24-.42.12-.64l-2-3.46c-.09-.16-.26-.25-.44-.25-.06 0-.12.01-.17.03l-2.49 1c-.52-.4-1.08-.73-1.69-.98l-.38-2.65C14.46 2.18 14.25 2 14 2h-4c-.25 0-.46.18-.49.42l-.38 2.65c-.61.25-1.17.59-1.69.98l-2.49-1c-.06-.02-.12-.03-.18-.03-.17 0-.34.09-.43.25l-2 3.46c-.13.22-.07.49.12.64l2.11 1.65c-.04.32-.07.65-.07.98 0 .33.03.66.07.98l-2.11 1.65c-.19.15-.24.42-.12.64l2 3.46c.09.16.26.25.44.25.06 0 .12-.01.17-.03l2.49-1c.52.4 1.08.73 1.69.98l.38 2.65c.03.24.24.42.49.42h4c.25 0 .46-.18.49-.42l.38-2.65c.61-.25 1.17-.59 1.69-.98l2.49 1c.06.02.12.03.18.03.17 0 .34-.09.43-.25l2-3.46c.12-.22.07-.49-.12-.64l-2.11-1.65zm-1.98-1.71c.04.31.05.52.05.73 0 .21-.02.43-.05.73l-.14 1.13.89.7 1.08.84-.7 1.21-1.27-.51-1.04-.42-.9.68c-.43.32-.84.56-1.25.73l-1.06.43-.16 1.13-.2 1.35h-1.4l-.19-1.35-.16-1.13-1.06-.43c-.43-.18-.83-.41-1.23-.71l-.91-.7-1.06.43-1.27.51-.7-1.21 1.08-.84.89-.7-.14-1.13c-.03-.31-.05-.54-.05-.74s.02-.43.05-.73l.14-1.13-.89-.7-1.08-.84.7-1.21 1.27.51 1.04.42.9-.68c.43-.32.84-.56 1.25-.73l1.06-.43.16-1.13.2-1.35h1.39l.19 1.35.16 1.13 1.06.43c.43.18.83.41 1.23.71l.91.7 1.06-.43 1.27-.51.7 1.21-1.07.85-.89.7.14 1.13zM12 8c-2.21 0-4 1.79-4 4s1.79 4 4 4 4-1.79 4-4-1.79-4-4-4zm0 6c-1.1 0-2-.9-2-2s.9-2 2-2 2 .9 2 2-.9 2-2 2z"/></svg></div>
<div id="sb"></div>
</div>
</body></html>
